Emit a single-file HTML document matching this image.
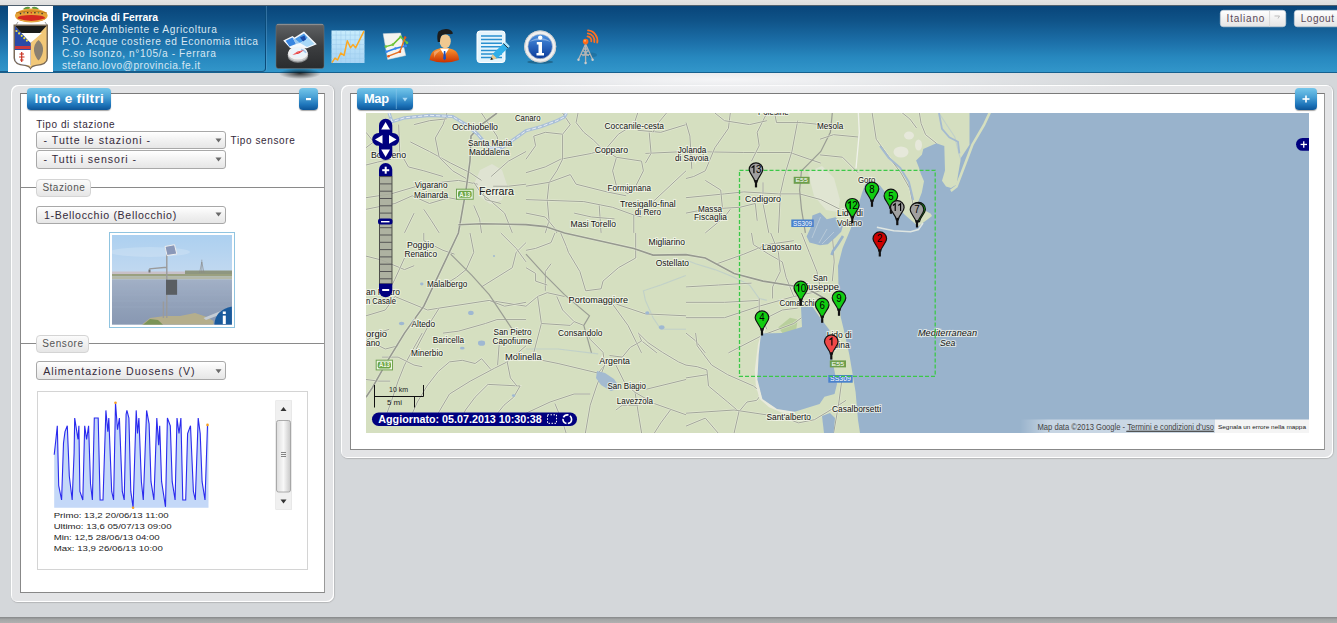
<!DOCTYPE html>
<html><head><meta charset="utf-8">
<style>
*{box-sizing:border-box;margin:0;padding:0}
html,body{width:1337px;height:623px;overflow:hidden}
body{background:#d4d7da;font-family:"Liberation Sans",sans-serif;position:relative}
.abs{position:absolute}
#topstrip{left:0;top:0;width:1337px;height:6px;background:linear-gradient(#e4e4e4,#dcdcdc)}
#header{left:0;top:5px;width:1337px;height:68px;background:linear-gradient(#08457a 0%,#0f5388 22%,#1b6da6 52%,#2788bf 78%,#3296ca 100%);border-top:1px solid #50606e;border-bottom:1px solid #15608e}
#hbox{left:0;top:6px;width:266px;height:66px;border-right:1px solid #0a4a78;border-bottom:1px solid #1a5a88;border-radius:0 0 4px 0;box-shadow:1px 0 0 rgba(120,180,220,.35)}
#glow{left:300px;top:73px;width:850px;height:22px;background:radial-gradient(ellipse 50% 100% at 50% 30%,rgba(248,248,250,.9),rgba(248,248,250,0))}
#bottomstrip{left:0;top:617px;width:1337px;height:6px;background:linear-gradient(#868889,#a4a6a6 40%,#b0b0b0)}
.panel{background:#e3e4e6;border-radius:7px;box-shadow:0 1px 1px #b4b6b8, 1px 0 1px #babcbe, inset 1px 1px 0 #fff, inset -1px -1px 0 #fff}
.inner{background:#fff;border:1px solid #7a7a7a;border-left-color:#888;border-right-color:#999;border-bottom-color:#888}
.bbtn{background:linear-gradient(#74c6ea 0%,#4aa2d6 40%,#1f76bb 75%,#0c5598 100%);border-radius:4px;box-shadow:0 1px 1px rgba(0,0,0,.35)}
.sel{left:36px;width:190px;height:18.5px;border:1px solid #a8a8a8;border-radius:3px;background:linear-gradient(#ffffff,#f4f4f4 40%,#e6e6e6)}
.legend{border:1px solid #d4d4d4;border-radius:4px;background:linear-gradient(#fbfbfb,#e6e6e6)}
</style></head><body>
<div id="topstrip" class="abs"></div>
<div id="header" class="abs"></div>
<div id="hbox" class="abs"></div>
<div id="bottomstrip" class="abs"></div>

<!-- left panel -->
<div class="abs panel" style="left:11px;top:85px;width:323px;height:517px"></div>
<!-- map panel -->
<div class="abs panel" style="left:341px;top:85px;width:992px;height:373px"></div>
<div id="glow" class="abs"></div>
<div class="abs inner" style="left:20px;top:93px;width:305px;height:500px"></div>
<div class="abs inner" style="left:350px;top:93px;width:975px;height:357px"></div>

<div class="abs bbtn" style="left:27px;top:88px;width:84px;height:22px"></div>
<div class="abs bbtn" style="left:299px;top:88px;width:19px;height:22px"></div>
<div class="abs bbtn" style="left:357px;top:88px;width:56px;height:22px"></div>
<div class="abs bbtn" style="left:1295px;top:88px;width:22px;height:22px"></div>

<div class="abs sel" style="top:130.5px"></div>
<div class="abs sel" style="top:150px"></div>
<div class="abs" style="left:21px;top:187px;width:303px;height:1px;background:#8a8a8a"></div>
<div class="abs legend" style="left:35.5px;top:178.5px;width:55px;height:18px"></div>
<div class="abs sel" style="top:205.5px"></div>
<div class="abs" style="left:21px;top:343px;width:303px;height:1px;background:#8a8a8a"></div>
<div class="abs legend" style="left:35.5px;top:334.5px;width:53px;height:18px"></div>
<div class="abs sel" style="top:361px"></div>
<div class="abs" style="left:37px;top:391px;width:271px;height:179px;border:1px solid #d4d4d4;background:#fff"></div>

<div id="map" class="abs" style="left:366px;top:113px;width:943px;height:320px;overflow:hidden"><svg width="943" height="320" viewBox="366 113 943 320" style="position:absolute;left:0;top:0;font-family:'Liberation Sans',sans-serif">
<rect x="366" y="113" width="943" height="320" fill="#d5dfc0"/>
<polygon points="480.0,170.0 492.0,164.0 502.0,170.0 507.0,185.0 502.0,200.0 490.0,204.0 479.0,196.0 475.0,182.0" fill="#dfe3d2"/>
<polygon points="808.0,172.0 822.0,166.0 834.0,178.0 840.0,200.0 838.0,212.0 826.0,210.0 814.0,196.0" fill="#e0e5d2"/>
<ellipse cx="909" cy="135.5" rx="5" ry="4" fill="#e6e8da"/><ellipse cx="901" cy="152" rx="7.5" ry="5.5" fill="#e6e8da"/><ellipse cx="918.5" cy="145" rx="3.5" ry="5.5" fill="#e6e8da"/>
<polygon points="778.4,327.3 790.0,317.7 797.7,319.6 795.7,333.1 782.3,333.1" fill="#b9cf9c"/>
<polyline points="366.0,165.0 377.6,162.1 391.0,159.2" fill="none" stroke="#eef0e2" stroke-width="2.2" stroke-opacity=".55"/>
<polyline points="366.0,165.0 377.6,162.1 391.0,159.2" fill="none" stroke="#a2a69a" stroke-width="1"/>
<polyline points="410.3,141.9 429.5,151.5 450.7,163.1 470.0,172.7 481.5,180.4" fill="none" stroke="#eef0e2" stroke-width="2.2" stroke-opacity=".55"/>
<polyline points="410.3,141.9 429.5,151.5 450.7,163.1 470.0,172.7 481.5,180.4" fill="none" stroke="#a2a69a" stroke-width="1"/>
<polyline points="366.0,197.7 391.0,193.9 423.8,184.2 458.4,180.4 477.7,184.2" fill="none" stroke="#eef0e2" stroke-width="2.2" stroke-opacity=".55"/>
<polyline points="366.0,197.7 391.0,193.9 423.8,184.2 458.4,180.4 477.7,184.2" fill="none" stroke="#a2a69a" stroke-width="1"/>
<polyline points="398.7,124.6 399.7,151.5 408.4,166.9 423.8,170.8 443.0,176.5" fill="none" stroke="#eef0e2" stroke-width="2.2" stroke-opacity=".55"/>
<polyline points="398.7,124.6 399.7,151.5 408.4,166.9 423.8,170.8 443.0,176.5" fill="none" stroke="#a2a69a" stroke-width="1"/>
<polyline points="366.0,209.3 394.9,203.5 412.2,195.8 429.5,203.5 448.8,197.7 458.4,199.6" fill="none" stroke="#eef0e2" stroke-width="2.2" stroke-opacity=".55"/>
<polyline points="366.0,209.3 394.9,203.5 412.2,195.8 429.5,203.5 448.8,197.7 458.4,199.6" fill="none" stroke="#a2a69a" stroke-width="1"/>
<polyline points="423.8,209.3 431.5,220.8 439.2,232.9" fill="none" stroke="#eef0e2" stroke-width="2.2" stroke-opacity=".55"/>
<polyline points="423.8,209.3 431.5,220.8 439.2,232.9" fill="none" stroke="#a2a69a" stroke-width="1"/>
<polyline points="446.9,113.0 443.0,124.6 435.3,138.0 439.2,157.3 452.6,170.8 466.1,178.5" fill="none" stroke="#eef0e2" stroke-width="2.2" stroke-opacity=".55"/>
<polyline points="446.9,113.0 443.0,124.6 435.3,138.0 439.2,157.3 452.6,170.8 466.1,178.5" fill="none" stroke="#a2a69a" stroke-width="1"/>
<polyline points="491.1,176.5 508.5,161.1 526.0,151.5" fill="none" stroke="#eef0e2" stroke-width="2.2" stroke-opacity=".55"/>
<polyline points="491.1,176.5 508.5,161.1 526.0,151.5" fill="none" stroke="#a2a69a" stroke-width="1"/>
<polyline points="473.8,205.4 479.6,218.9 481.5,232.9" fill="none" stroke="#eef0e2" stroke-width="2.2" stroke-opacity=".55"/>
<polyline points="473.8,205.4 479.6,218.9 481.5,232.9" fill="none" stroke="#a2a69a" stroke-width="1"/>
<polyline points="489.2,199.6 504.6,213.1 512.3,232.9" fill="none" stroke="#eef0e2" stroke-width="2.2" stroke-opacity=".55"/>
<polyline points="489.2,199.6 504.6,213.1 512.3,232.9" fill="none" stroke="#a2a69a" stroke-width="1"/>
<polyline points="493.1,186.2 508.5,186.2 526.0,184.2" fill="none" stroke="#eef0e2" stroke-width="2.2" stroke-opacity=".55"/>
<polyline points="493.1,186.2 508.5,186.2 526.0,184.2" fill="none" stroke="#a2a69a" stroke-width="1"/>
<polyline points="414.1,213.1 404.5,232.9" fill="none" stroke="#eef0e2" stroke-width="2.2" stroke-opacity=".55"/>
<polyline points="414.1,213.1 404.5,232.9" fill="none" stroke="#a2a69a" stroke-width="1"/>
<polyline points="481.5,113.0 489.2,124.6 496.9,136.1 500.8,149.6" fill="none" stroke="#eef0e2" stroke-width="2.2" stroke-opacity=".55"/>
<polyline points="481.5,113.0 489.2,124.6 496.9,136.1 500.8,149.6" fill="none" stroke="#a2a69a" stroke-width="1"/>
<polyline points="366.0,132.3 373.7,141.9 366.0,147.7" fill="none" stroke="#eef0e2" stroke-width="2.2" stroke-opacity=".55"/>
<polyline points="366.0,132.3 373.7,141.9 366.0,147.7" fill="none" stroke="#a2a69a" stroke-width="1"/>
<polyline points="414.1,124.6 429.5,120.7 446.9,118.8" fill="none" stroke="#eef0e2" stroke-width="2.2" stroke-opacity=".55"/>
<polyline points="414.1,124.6 429.5,120.7 446.9,118.8" fill="none" stroke="#a2a69a" stroke-width="1"/>
<polyline points="481.5,188.1 485.4,199.6 500.8,203.5" fill="none" stroke="#eef0e2" stroke-width="2.2" stroke-opacity=".55"/>
<polyline points="481.5,188.1 485.4,199.6 500.8,203.5" fill="none" stroke="#a2a69a" stroke-width="1"/>
<polyline points="473.8,182.3 481.5,193.9 489.2,199.6" fill="none" stroke="#eef0e2" stroke-width="2.2" stroke-opacity=".55"/>
<polyline points="473.8,182.3 481.5,193.9 489.2,199.6" fill="none" stroke="#a2a69a" stroke-width="1"/>
<polyline points="526.0,172.7 545.3,166.9 560.7,159.2 591.5,153.4 603.0,149.6" fill="none" stroke="#eef0e2" stroke-width="2.2" stroke-opacity=".55"/>
<polyline points="526.0,172.7 545.3,166.9 560.7,159.2 591.5,153.4 603.0,149.6" fill="none" stroke="#a2a69a" stroke-width="1"/>
<polyline points="562.6,113.0 570.3,124.6 562.6,134.2 562.6,159.2 556.8,170.8 549.1,182.3 547.2,199.6 549.1,220.8 545.3,232.9" fill="none" stroke="#eef0e2" stroke-width="2.2" stroke-opacity=".55"/>
<polyline points="562.6,113.0 570.3,124.6 562.6,134.2 562.6,159.2 556.8,170.8 549.1,182.3 547.2,199.6 549.1,220.8 545.3,232.9" fill="none" stroke="#a2a69a" stroke-width="1"/>
<polyline points="578.0,113.0 576.1,122.6 583.8,132.3 593.4,140.0 603.0,149.6" fill="none" stroke="#eef0e2" stroke-width="2.2" stroke-opacity=".55"/>
<polyline points="578.0,113.0 576.1,122.6 583.8,132.3 593.4,140.0 603.0,149.6" fill="none" stroke="#a2a69a" stroke-width="1"/>
<polyline points="637.7,113.0 633.8,124.6 618.4,134.2 606.9,147.7" fill="none" stroke="#eef0e2" stroke-width="2.2" stroke-opacity=".55"/>
<polyline points="637.7,113.0 633.8,124.6 618.4,134.2 606.9,147.7" fill="none" stroke="#a2a69a" stroke-width="1"/>
<polyline points="603.0,149.6 616.5,157.3 612.6,170.8 616.5,186.2 628.0,193.9" fill="none" stroke="#eef0e2" stroke-width="2.2" stroke-opacity=".55"/>
<polyline points="603.0,149.6 616.5,157.3 612.6,170.8 616.5,186.2 628.0,193.9" fill="none" stroke="#a2a69a" stroke-width="1"/>
<polyline points="616.5,157.3 641.5,161.1 643.4,170.8 635.7,186.2 628.0,193.9" fill="none" stroke="#eef0e2" stroke-width="2.2" stroke-opacity=".55"/>
<polyline points="616.5,157.3 641.5,161.1 643.4,170.8 635.7,186.2 628.0,193.9" fill="none" stroke="#a2a69a" stroke-width="1"/>
<polyline points="526.0,199.6 583.8,201.6 612.6,207.3 633.8,215.0 641.5,217.0" fill="none" stroke="#eef0e2" stroke-width="2.2" stroke-opacity=".55"/>
<polyline points="526.0,199.6 583.8,201.6 612.6,207.3 633.8,215.0 641.5,217.0" fill="none" stroke="#a2a69a" stroke-width="1"/>
<polyline points="526.0,186.2 549.1,182.3 570.3,174.6 576.1,184.2 606.9,191.9 626.1,195.8" fill="none" stroke="#eef0e2" stroke-width="2.2" stroke-opacity=".55"/>
<polyline points="526.0,186.2 549.1,182.3 570.3,174.6 576.1,184.2 606.9,191.9 626.1,195.8" fill="none" stroke="#a2a69a" stroke-width="1"/>
<polyline points="633.8,215.0 633.8,232.9" fill="none" stroke="#eef0e2" stroke-width="2.2" stroke-opacity=".55"/>
<polyline points="633.8,215.0 633.8,232.9" fill="none" stroke="#a2a69a" stroke-width="1"/>
<polyline points="599.2,205.4 601.1,232.9" fill="none" stroke="#eef0e2" stroke-width="2.2" stroke-opacity=".55"/>
<polyline points="599.2,205.4 601.1,232.9" fill="none" stroke="#a2a69a" stroke-width="1"/>
<polyline points="645.4,153.4 686.0,151.5" fill="none" stroke="#eef0e2" stroke-width="2.2" stroke-opacity=".55"/>
<polyline points="645.4,153.4 686.0,151.5" fill="none" stroke="#a2a69a" stroke-width="1"/>
<polyline points="649.2,132.3 651.1,153.4 645.4,163.1" fill="none" stroke="#eef0e2" stroke-width="2.2" stroke-opacity=".55"/>
<polyline points="649.2,132.3 651.1,153.4 645.4,163.1" fill="none" stroke="#a2a69a" stroke-width="1"/>
<polyline points="651.1,203.5 686.0,170.8" fill="none" stroke="#eef0e2" stroke-width="2.2" stroke-opacity=".55"/>
<polyline points="651.1,203.5 686.0,170.8" fill="none" stroke="#a2a69a" stroke-width="1"/>
<polyline points="526.0,213.1 545.3,217.0 554.9,228.5 556.8,232.9" fill="none" stroke="#eef0e2" stroke-width="2.2" stroke-opacity=".55"/>
<polyline points="526.0,213.1 545.3,217.0 554.9,228.5 556.8,232.9" fill="none" stroke="#a2a69a" stroke-width="1"/>
<polyline points="637.7,130.3 660.8,132.3 686.0,124.6" fill="none" stroke="#eef0e2" stroke-width="2.2" stroke-opacity=".55"/>
<polyline points="637.7,130.3 660.8,132.3 686.0,124.6" fill="none" stroke="#a2a69a" stroke-width="1"/>
<polyline points="526.0,159.2 535.6,145.7 533.7,136.1 545.3,132.3 562.6,134.2" fill="none" stroke="#eef0e2" stroke-width="2.2" stroke-opacity=".55"/>
<polyline points="526.0,159.2 535.6,145.7 533.7,136.1 545.3,132.3 562.6,134.2" fill="none" stroke="#a2a69a" stroke-width="1"/>
<polyline points="666.5,113.0 656.9,124.6 653.1,132.3" fill="none" stroke="#eef0e2" stroke-width="2.2" stroke-opacity=".55"/>
<polyline points="666.5,113.0 656.9,124.6 653.1,132.3" fill="none" stroke="#a2a69a" stroke-width="1"/>
<polyline points="574.1,213.1 591.5,217.0 614.6,218.9" fill="none" stroke="#eef0e2" stroke-width="2.2" stroke-opacity=".55"/>
<polyline points="574.1,213.1 591.5,217.0 614.6,218.9" fill="none" stroke="#a2a69a" stroke-width="1"/>
<polyline points="686.0,151.5 743.8,152.5 790.0,152.5 809.2,159.2 820.8,163.1" fill="none" stroke="#eef0e2" stroke-width="2.2" stroke-opacity=".55"/>
<polyline points="686.0,151.5 743.8,152.5 790.0,152.5 809.2,159.2 820.8,163.1" fill="none" stroke="#a2a69a" stroke-width="1"/>
<polyline points="730.3,113.0 728.4,128.4 714.9,147.7 705.3,170.8 693.7,176.5 686.0,178.5" fill="none" stroke="#eef0e2" stroke-width="2.2" stroke-opacity=".55"/>
<polyline points="730.3,113.0 728.4,128.4 714.9,147.7 705.3,170.8 693.7,176.5 686.0,178.5" fill="none" stroke="#a2a69a" stroke-width="1"/>
<polyline points="797.7,120.7 791.9,151.5 784.2,176.5 780.3,193.9 778.4,232.9" fill="none" stroke="#eef0e2" stroke-width="2.2" stroke-opacity=".55"/>
<polyline points="797.7,120.7 791.9,151.5 784.2,176.5 780.3,193.9 778.4,232.9" fill="none" stroke="#a2a69a" stroke-width="1"/>
<polyline points="766.9,113.0 757.2,132.3 759.2,145.7 751.5,161.1" fill="none" stroke="#eef0e2" stroke-width="2.2" stroke-opacity=".55"/>
<polyline points="766.9,113.0 757.2,132.3 759.2,145.7 751.5,161.1" fill="none" stroke="#a2a69a" stroke-width="1"/>
<polyline points="686.0,197.7 724.5,193.9 743.8,191.9 778.4,193.9 799.6,193.9 820.8,199.6 840.0,209.3" fill="none" stroke="#eef0e2" stroke-width="2.2" stroke-opacity=".55"/>
<polyline points="686.0,197.7 724.5,193.9 743.8,191.9 778.4,193.9 799.6,193.9 820.8,199.6 840.0,209.3" fill="none" stroke="#a2a69a" stroke-width="1"/>
<polyline points="705.3,180.4 720.7,190.0 722.6,209.3" fill="none" stroke="#eef0e2" stroke-width="2.2" stroke-opacity=".55"/>
<polyline points="705.3,180.4 720.7,190.0 722.6,209.3" fill="none" stroke="#a2a69a" stroke-width="1"/>
<polyline points="686.0,213.1 705.3,209.3 739.9,207.3 755.3,203.5 757.2,220.8" fill="none" stroke="#eef0e2" stroke-width="2.2" stroke-opacity=".55"/>
<polyline points="686.0,213.1 705.3,209.3 739.9,207.3 755.3,203.5 757.2,220.8" fill="none" stroke="#a2a69a" stroke-width="1"/>
<polyline points="763.0,182.3 763.0,203.5 768.8,232.9" fill="none" stroke="#eef0e2" stroke-width="2.2" stroke-opacity=".55"/>
<polyline points="763.0,182.3 763.0,203.5 768.8,232.9" fill="none" stroke="#a2a69a" stroke-width="1"/>
<polyline points="714.9,113.0 724.5,120.7 749.5,124.6 766.9,120.7" fill="none" stroke="#eef0e2" stroke-width="2.2" stroke-opacity=".55"/>
<polyline points="714.9,113.0 724.5,120.7 749.5,124.6 766.9,120.7" fill="none" stroke="#a2a69a" stroke-width="1"/>
<polyline points="686.0,122.6 689.9,136.1 691.8,168.8" fill="none" stroke="#eef0e2" stroke-width="2.2" stroke-opacity=".55"/>
<polyline points="686.0,122.6 689.9,136.1 691.8,168.8" fill="none" stroke="#a2a69a" stroke-width="1"/>
<polyline points="774.6,113.0 776.5,122.6 801.5,122.6 820.8,124.6" fill="none" stroke="#eef0e2" stroke-width="2.2" stroke-opacity=".55"/>
<polyline points="774.6,113.0 776.5,122.6 801.5,122.6 820.8,124.6" fill="none" stroke="#a2a69a" stroke-width="1"/>
<polyline points="705.3,232.9 724.5,217.0 730.3,209.3" fill="none" stroke="#eef0e2" stroke-width="2.2" stroke-opacity=".55"/>
<polyline points="705.3,232.9 724.5,217.0 730.3,209.3" fill="none" stroke="#a2a69a" stroke-width="1"/>
<polyline points="832.3,113.0 830.4,132.3 820.8,151.5 809.2,163.1 801.5,170.8 799.6,190.0 801.5,209.3 805.4,232.9" fill="none" stroke="#9a9d94" stroke-width="1.2"/>
<polyline points="470.0,233.0 473.8,252.3 466.1,269.6 456.5,277.3 446.9,283.1" fill="none" stroke="#eef0e2" stroke-width="2.2" stroke-opacity=".55"/>
<polyline points="470.0,233.0 473.8,252.3 466.1,269.6 456.5,277.3 446.9,283.1" fill="none" stroke="#a2a69a" stroke-width="1"/>
<polyline points="423.8,233.0 423.8,240.7 443.0,250.3 454.6,254.2" fill="none" stroke="#eef0e2" stroke-width="2.2" stroke-opacity=".55"/>
<polyline points="423.8,233.0 423.8,240.7 443.0,250.3 454.6,254.2" fill="none" stroke="#a2a69a" stroke-width="1"/>
<polyline points="366.0,256.1 381.4,260.0 404.5,269.6 414.1,265.7" fill="none" stroke="#eef0e2" stroke-width="2.2" stroke-opacity=".55"/>
<polyline points="366.0,256.1 381.4,260.0 404.5,269.6 414.1,265.7" fill="none" stroke="#a2a69a" stroke-width="1"/>
<polyline points="394.9,296.5 427.6,310.0 439.2,308.1 489.2,300.4 526.0,306.2" fill="none" stroke="#eef0e2" stroke-width="2.2" stroke-opacity=".55"/>
<polyline points="394.9,296.5 427.6,310.0 439.2,308.1 489.2,300.4 526.0,306.2" fill="none" stroke="#a2a69a" stroke-width="1"/>
<polyline points="439.2,308.1 429.5,323.5 414.1,352.9" fill="none" stroke="#eef0e2" stroke-width="2.2" stroke-opacity=".55"/>
<polyline points="439.2,308.1 429.5,323.5 414.1,352.9" fill="none" stroke="#a2a69a" stroke-width="1"/>
<polyline points="481.5,286.9 512.3,267.7 516.2,252.3 526.0,242.6" fill="none" stroke="#eef0e2" stroke-width="2.2" stroke-opacity=".55"/>
<polyline points="481.5,286.9 512.3,267.7 516.2,252.3 526.0,242.6" fill="none" stroke="#a2a69a" stroke-width="1"/>
<polyline points="500.8,233.0 516.2,248.4 526.0,261.9" fill="none" stroke="#eef0e2" stroke-width="2.2" stroke-opacity=".55"/>
<polyline points="500.8,233.0 516.2,248.4 526.0,261.9" fill="none" stroke="#a2a69a" stroke-width="1"/>
<polyline points="366.0,315.8 385.3,310.0 394.9,296.5" fill="none" stroke="#eef0e2" stroke-width="2.2" stroke-opacity=".55"/>
<polyline points="366.0,315.8 385.3,310.0 394.9,296.5" fill="none" stroke="#a2a69a" stroke-width="1"/>
<polyline points="443.0,333.1 458.4,331.2 485.4,323.5 496.9,319.6 526.0,319.6" fill="none" stroke="#eef0e2" stroke-width="2.2" stroke-opacity=".55"/>
<polyline points="443.0,333.1 458.4,331.2 485.4,323.5 496.9,319.6 526.0,319.6" fill="none" stroke="#a2a69a" stroke-width="1"/>
<polyline points="404.5,258.0 394.9,279.2 389.1,290.8" fill="none" stroke="#eef0e2" stroke-width="2.2" stroke-opacity=".55"/>
<polyline points="404.5,258.0 394.9,279.2 389.1,290.8" fill="none" stroke="#a2a69a" stroke-width="1"/>
<polyline points="366.0,340.8 377.6,333.1 389.1,329.3" fill="none" stroke="#eef0e2" stroke-width="2.2" stroke-opacity=".55"/>
<polyline points="366.0,340.8 377.6,333.1 389.1,329.3" fill="none" stroke="#a2a69a" stroke-width="1"/>
<polyline points="489.2,300.4 504.6,306.2 526.0,302.3" fill="none" stroke="#eef0e2" stroke-width="2.2" stroke-opacity=".55"/>
<polyline points="489.2,300.4 504.6,306.2 526.0,302.3" fill="none" stroke="#a2a69a" stroke-width="1"/>
<polyline points="450.7,254.2 471.9,275.4 489.2,294.6 512.3,329.3" fill="none" stroke="#9a9d94" stroke-width="1.2"/>
<ellipse cx="470.9" cy="312.9" rx="2.8" ry="2.1" fill="#9fb8d2"/>
<ellipse cx="481.5" cy="342.7" rx="3.5" ry="2.1" fill="#9fb8d2"/>
<ellipse cx="401.6" cy="323.5" rx="2.8" ry="1.7" fill="#9fb8d2"/>
<ellipse cx="421.8" cy="284.0" rx="1.7" ry="1.4" fill="#9fb8d2"/>
<ellipse cx="494.0" cy="256.1" rx="1.0" ry="1.0" fill="#9fb8d2"/>
<polyline points="685.8,275.4 660.8,285.0 643.4,290.8 645.4,300.4 653.1,317.7 660.8,329.3 686.0,329.3" fill="none" stroke="#a9bed2" stroke-width="1.1" stroke-opacity=".45"/>
<polyline points="560.7,233.0 566.4,246.5 568.4,252.3 579.9,271.5 585.7,290.8 601.1,288.8 603.0,281.1 618.4,267.7 635.7,258.0 635.7,233.0" fill="none" stroke="#eef0e2" stroke-width="2.2" stroke-opacity=".55"/>
<polyline points="560.7,233.0 566.4,246.5 568.4,252.3 579.9,271.5 585.7,290.8 601.1,288.8 603.0,281.1 618.4,267.7 635.7,258.0 635.7,233.0" fill="none" stroke="#a2a69a" stroke-width="1"/>
<polyline points="526.0,306.2 537.6,296.5 547.2,292.7 564.5,296.5" fill="none" stroke="#eef0e2" stroke-width="2.2" stroke-opacity=".55"/>
<polyline points="526.0,306.2 537.6,296.5 547.2,292.7 564.5,296.5" fill="none" stroke="#a2a69a" stroke-width="1"/>
<polyline points="537.6,296.5 541.4,323.5 533.7,352.9" fill="none" stroke="#eef0e2" stroke-width="2.2" stroke-opacity=".55"/>
<polyline points="537.6,296.5 541.4,323.5 533.7,352.9" fill="none" stroke="#a2a69a" stroke-width="1"/>
<polyline points="612.6,304.2 628.0,325.4 641.5,352.9" fill="none" stroke="#eef0e2" stroke-width="2.2" stroke-opacity=".55"/>
<polyline points="612.6,304.2 628.0,325.4 641.5,352.9" fill="none" stroke="#a2a69a" stroke-width="1"/>
<polyline points="616.5,304.2 645.4,313.9 686.0,315.8" fill="none" stroke="#eef0e2" stroke-width="2.2" stroke-opacity=".55"/>
<polyline points="616.5,304.2 645.4,313.9 686.0,315.8" fill="none" stroke="#a2a69a" stroke-width="1"/>
<polyline points="545.3,290.8 545.3,271.5 551.0,263.8" fill="none" stroke="#eef0e2" stroke-width="2.2" stroke-opacity=".55"/>
<polyline points="545.3,290.8 545.3,271.5 551.0,263.8" fill="none" stroke="#a2a69a" stroke-width="1"/>
<polyline points="541.4,323.5 570.3,325.4 574.1,321.6 583.8,325.4" fill="none" stroke="#eef0e2" stroke-width="2.2" stroke-opacity=".55"/>
<polyline points="541.4,323.5 570.3,325.4 574.1,321.6 583.8,325.4" fill="none" stroke="#a2a69a" stroke-width="1"/>
<polyline points="526.0,267.7 535.6,273.4 535.6,281.1 547.2,285.0" fill="none" stroke="#eef0e2" stroke-width="2.2" stroke-opacity=".55"/>
<polyline points="526.0,267.7 535.6,273.4 535.6,281.1 547.2,285.0" fill="none" stroke="#a2a69a" stroke-width="1"/>
<polyline points="554.9,233.0 551.0,242.6 535.6,248.4 526.0,250.3" fill="none" stroke="#eef0e2" stroke-width="2.2" stroke-opacity=".55"/>
<polyline points="554.9,233.0 551.0,242.6 535.6,248.4 526.0,250.3" fill="none" stroke="#a2a69a" stroke-width="1"/>
<polyline points="556.8,296.5 562.6,310.0 574.1,321.6" fill="none" stroke="#eef0e2" stroke-width="2.2" stroke-opacity=".55"/>
<polyline points="556.8,296.5 562.6,310.0 574.1,321.6" fill="none" stroke="#a2a69a" stroke-width="1"/>
<polyline points="641.5,340.8 656.9,352.9" fill="none" stroke="#eef0e2" stroke-width="2.2" stroke-opacity=".55"/>
<polyline points="641.5,340.8 656.9,352.9" fill="none" stroke="#a2a69a" stroke-width="1"/>
<polyline points="526.0,254.2 545.3,275.4 564.5,294.6 589.5,315.8 583.8,325.4 591.5,352.9" fill="none" stroke="#9a9d94" stroke-width="1.2"/>
<ellipse cx="661.7" cy="327.3" rx="2.8" ry="2.1" fill="#9fb8d2"/>
<ellipse cx="647.3" cy="312.9" rx="2.1" ry="1.7" fill="#9fb8d2"/>
<polyline points="686.0,260.0 695.6,263.8 714.9,269.6 734.1,277.3 749.5,285.0 759.2,298.5 766.9,300.4" fill="none" stroke="#a9bed2" stroke-width="1.1" stroke-opacity=".45"/>
<polyline points="686.0,317.7 724.5,317.7 759.2,306.2 793.8,296.5 820.8,290.8" fill="none" stroke="#eef0e2" stroke-width="2.2" stroke-opacity=".55"/>
<polyline points="686.0,317.7 724.5,317.7 759.2,306.2 793.8,296.5 820.8,290.8" fill="none" stroke="#a2a69a" stroke-width="1"/>
<polyline points="716.8,263.8 743.8,254.2 766.9,244.6 793.8,240.7" fill="none" stroke="#eef0e2" stroke-width="2.2" stroke-opacity=".55"/>
<polyline points="716.8,263.8 743.8,254.2 766.9,244.6 793.8,240.7" fill="none" stroke="#a2a69a" stroke-width="1"/>
<polyline points="751.5,233.0 753.4,244.6 768.8,254.2 782.3,261.9 786.1,277.3 793.8,296.5" fill="none" stroke="#eef0e2" stroke-width="2.2" stroke-opacity=".55"/>
<polyline points="751.5,233.0 753.4,244.6 768.8,254.2 782.3,261.9 786.1,277.3 793.8,296.5" fill="none" stroke="#a2a69a" stroke-width="1"/>
<polyline points="770.7,233.0 778.4,252.3 780.3,271.5 772.6,286.9 772.6,298.5" fill="none" stroke="#eef0e2" stroke-width="2.2" stroke-opacity=".55"/>
<polyline points="770.7,233.0 778.4,252.3 780.3,271.5 772.6,286.9 772.6,298.5" fill="none" stroke="#a2a69a" stroke-width="1"/>
<polyline points="801.5,233.0 809.2,252.3 816.9,271.5 820.8,290.8" fill="none" stroke="#eef0e2" stroke-width="2.2" stroke-opacity=".55"/>
<polyline points="801.5,233.0 809.2,252.3 816.9,271.5 820.8,290.8" fill="none" stroke="#a2a69a" stroke-width="1"/>
<polyline points="686.0,286.9 718.7,285.0 751.5,283.1" fill="none" stroke="#eef0e2" stroke-width="2.2" stroke-opacity=".55"/>
<polyline points="686.0,286.9 718.7,285.0 751.5,283.1" fill="none" stroke="#a2a69a" stroke-width="1"/>
<polyline points="728.4,352.9 763.0,335.0 793.8,323.5 801.5,317.7" fill="none" stroke="#eef0e2" stroke-width="2.2" stroke-opacity=".55"/>
<polyline points="728.4,352.9 763.0,335.0 793.8,323.5 801.5,317.7" fill="none" stroke="#a2a69a" stroke-width="1"/>
<polyline points="686.0,333.1 695.6,340.8 705.3,352.9" fill="none" stroke="#eef0e2" stroke-width="2.2" stroke-opacity=".55"/>
<polyline points="686.0,333.1 695.6,340.8 705.3,352.9" fill="none" stroke="#a2a69a" stroke-width="1"/>
<polyline points="686.0,302.3 724.5,302.3 759.2,300.4" fill="none" stroke="#eef0e2" stroke-width="2.2" stroke-opacity=".55"/>
<polyline points="686.0,302.3 724.5,302.3 759.2,300.4" fill="none" stroke="#a2a69a" stroke-width="1"/>
<polyline points="759.2,298.5 759.2,310.0 766.9,329.3" fill="none" stroke="#eef0e2" stroke-width="2.2" stroke-opacity=".55"/>
<polyline points="759.2,298.5 759.2,310.0 766.9,329.3" fill="none" stroke="#a2a69a" stroke-width="1"/>
<polyline points="766.9,317.7 782.3,310.0 797.7,308.1" fill="none" stroke="#eef0e2" stroke-width="2.2" stroke-opacity=".55"/>
<polyline points="766.9,317.7 782.3,310.0 797.7,308.1" fill="none" stroke="#a2a69a" stroke-width="1"/>
<polyline points="832.3,233.0 834.2,261.9 832.3,281.1" fill="none" stroke="#eef0e2" stroke-width="2.2" stroke-opacity=".55"/>
<polyline points="832.3,233.0 834.2,261.9 832.3,281.1" fill="none" stroke="#a2a69a" stroke-width="1"/>
<polyline points="422.2,333.0 414.1,347.4 404.5,365.1 398.1,381.1 391.7,400.4 386.9,413.2" fill="none" stroke="#eef0e2" stroke-width="2.2" stroke-opacity=".55"/>
<polyline points="422.2,333.0 414.1,347.4 404.5,365.1 398.1,381.1 391.7,400.4 386.9,413.2" fill="none" stroke="#a2a69a" stroke-width="1"/>
<polyline points="438.2,371.5 449.5,361.9 462.3,360.3 475.1,363.5 481.6,358.7 491.2,369.9" fill="none" stroke="#eef0e2" stroke-width="2.2" stroke-opacity=".55"/>
<polyline points="438.2,371.5 449.5,361.9 462.3,360.3 475.1,363.5 481.6,358.7 491.2,369.9" fill="none" stroke="#a2a69a" stroke-width="1"/>
<polyline points="438.2,371.5 427.0,386.0 417.4,402.0 410.9,416.5" fill="none" stroke="#eef0e2" stroke-width="2.2" stroke-opacity=".55"/>
<polyline points="438.2,371.5 427.0,386.0 417.4,402.0 410.9,416.5" fill="none" stroke="#a2a69a" stroke-width="1"/>
<polyline points="526.0,345.8 507.2,361.9 494.4,368.3 470.3,381.1 449.5,394.0 438.2,413.2 433.4,426.1" fill="none" stroke="#eef0e2" stroke-width="2.2" stroke-opacity=".55"/>
<polyline points="526.0,345.8 507.2,361.9 494.4,368.3 470.3,381.1 449.5,394.0 438.2,413.2 433.4,426.1" fill="none" stroke="#a2a69a" stroke-width="1"/>
<polyline points="488.0,384.4 520.1,386.0 513.6,397.2 504.0,405.2 497.6,413.2 491.2,422.9" fill="none" stroke="#eef0e2" stroke-width="2.2" stroke-opacity=".55"/>
<polyline points="488.0,384.4 520.1,386.0 513.6,397.2 504.0,405.2 497.6,413.2 491.2,422.9" fill="none" stroke="#a2a69a" stroke-width="1"/>
<polyline points="488.0,384.4 475.1,397.2 465.5,410.0 459.1,422.9" fill="none" stroke="#eef0e2" stroke-width="2.2" stroke-opacity=".55"/>
<polyline points="488.0,384.4 475.1,397.2 465.5,410.0 459.1,422.9" fill="none" stroke="#a2a69a" stroke-width="1"/>
<polyline points="382.0,357.1 398.1,357.1 414.1,365.1 422.2,366.7" fill="none" stroke="#eef0e2" stroke-width="2.2" stroke-opacity=".55"/>
<polyline points="382.0,357.1 398.1,357.1 414.1,365.1 422.2,366.7" fill="none" stroke="#a2a69a" stroke-width="1"/>
<polyline points="366.0,379.5 378.8,381.1 390.1,381.1" fill="none" stroke="#eef0e2" stroke-width="2.2" stroke-opacity=".55"/>
<polyline points="366.0,379.5 378.8,381.1 390.1,381.1" fill="none" stroke="#a2a69a" stroke-width="1"/>
<polyline points="499.2,344.2 497.6,365.1" fill="none" stroke="#eef0e2" stroke-width="2.2" stroke-opacity=".55"/>
<polyline points="499.2,344.2 497.6,365.1" fill="none" stroke="#a2a69a" stroke-width="1"/>
<polyline points="507.2,361.9 510.4,377.9 516.9,386.0" fill="none" stroke="#eef0e2" stroke-width="2.2" stroke-opacity=".55"/>
<polyline points="507.2,361.9 510.4,377.9 516.9,386.0" fill="none" stroke="#a2a69a" stroke-width="1"/>
<polyline points="366.0,345.8 375.6,344.2 385.3,349.0 398.1,345.8" fill="none" stroke="#eef0e2" stroke-width="2.2" stroke-opacity=".55"/>
<polyline points="366.0,345.8 375.6,344.2 385.3,349.0 398.1,345.8" fill="none" stroke="#a2a69a" stroke-width="1"/>
<ellipse cx="481.6" cy="343.4" rx="3.5" ry="2.3" fill="#9fb8d2"/>
<ellipse cx="462.3" cy="348.2" rx="2.3" ry="1.4" fill="#9fb8d2"/>
<ellipse cx="513.6" cy="395.6" rx="1.7" ry="1.4" fill="#9fb8d2"/>
<polyline points="526.0,349.0 558.1,349.0 598.2,353.9" fill="none" stroke="#a9bed2" stroke-width="1.1" stroke-opacity=".45"/>
<polyline points="526.0,357.1 558.1,363.5 598.2,373.1 604.6,365.1 603.0,352.3 590.2,339.4 587.0,333.0" fill="none" stroke="#eef0e2" stroke-width="2.2" stroke-opacity=".55"/>
<polyline points="526.0,357.1 558.1,363.5 598.2,373.1 604.6,365.1 603.0,352.3 590.2,339.4 587.0,333.0" fill="none" stroke="#a2a69a" stroke-width="1"/>
<polyline points="604.6,365.1 596.6,386.0 590.2,405.2 585.4,433.0" fill="none" stroke="#eef0e2" stroke-width="2.2" stroke-opacity=".55"/>
<polyline points="604.6,365.1 596.6,386.0 590.2,405.2 585.4,433.0" fill="none" stroke="#a2a69a" stroke-width="1"/>
<polyline points="609.5,355.5 622.3,357.1 630.3,347.4 641.6,341.0 638.3,333.0" fill="none" stroke="#eef0e2" stroke-width="2.2" stroke-opacity=".55"/>
<polyline points="609.5,355.5 622.3,357.1 630.3,347.4 641.6,341.0 638.3,333.0" fill="none" stroke="#a2a69a" stroke-width="1"/>
<polyline points="615.9,365.1 625.5,384.4 635.1,392.4 638.3,413.2 641.6,433.0" fill="none" stroke="#eef0e2" stroke-width="2.2" stroke-opacity=".55"/>
<polyline points="615.9,365.1 625.5,384.4 635.1,392.4 638.3,413.2 641.6,433.0" fill="none" stroke="#a2a69a" stroke-width="1"/>
<polyline points="635.1,392.4 654.4,403.6 686.0,414.8" fill="none" stroke="#eef0e2" stroke-width="2.2" stroke-opacity=".55"/>
<polyline points="635.1,392.4 654.4,403.6 686.0,414.8" fill="none" stroke="#a2a69a" stroke-width="1"/>
<polyline points="646.4,389.2 686.0,379.5" fill="none" stroke="#eef0e2" stroke-width="2.2" stroke-opacity=".55"/>
<polyline points="646.4,389.2 686.0,379.5" fill="none" stroke="#a2a69a" stroke-width="1"/>
<polyline points="526.0,413.2 550.1,402.0 574.1,394.0 590.2,394.0" fill="none" stroke="#eef0e2" stroke-width="2.2" stroke-opacity=".55"/>
<polyline points="526.0,413.2 550.1,402.0 574.1,394.0 590.2,394.0" fill="none" stroke="#a2a69a" stroke-width="1"/>
<polyline points="638.3,333.0 648.0,342.6 662.4,352.3 678.5,361.9 686.0,365.1" fill="none" stroke="#eef0e2" stroke-width="2.2" stroke-opacity=".55"/>
<polyline points="638.3,333.0 648.0,342.6 662.4,352.3 678.5,361.9 686.0,365.1" fill="none" stroke="#a2a69a" stroke-width="1"/>
<polyline points="615.9,410.0 622.3,405.2 638.3,405.2" fill="none" stroke="#eef0e2" stroke-width="2.2" stroke-opacity=".55"/>
<polyline points="615.9,410.0 622.3,405.2 638.3,405.2" fill="none" stroke="#a2a69a" stroke-width="1"/>
<polyline points="670.4,410.0 660.8,422.9 654.4,433.0" fill="none" stroke="#eef0e2" stroke-width="2.2" stroke-opacity=".55"/>
<polyline points="670.4,410.0 660.8,422.9 654.4,433.0" fill="none" stroke="#a2a69a" stroke-width="1"/>
<polyline points="554.9,403.6 562.9,422.9 566.1,433.0" fill="none" stroke="#eef0e2" stroke-width="2.2" stroke-opacity=".55"/>
<polyline points="554.9,403.6 562.9,422.9 566.1,433.0" fill="none" stroke="#a2a69a" stroke-width="1"/>
<polyline points="686.0,365.1 697.2,366.7 706.9,369.9 708.5,386.0 718.1,394.0 727.7,402.0 739.0,411.6 734.1,433.0" fill="none" stroke="#eef0e2" stroke-width="2.2" stroke-opacity=".55"/>
<polyline points="686.0,365.1 697.2,366.7 706.9,369.9 708.5,386.0 718.1,394.0 727.7,402.0 739.0,411.6 734.1,433.0" fill="none" stroke="#a2a69a" stroke-width="1"/>
<polyline points="739.0,411.6 747.0,402.0 756.6,400.4 763.0,392.4" fill="none" stroke="#eef0e2" stroke-width="2.2" stroke-opacity=".55"/>
<polyline points="739.0,411.6 747.0,402.0 756.6,400.4 763.0,392.4" fill="none" stroke="#a2a69a" stroke-width="1"/>
<polyline points="686.0,377.9 706.9,374.7" fill="none" stroke="#eef0e2" stroke-width="2.2" stroke-opacity=".55"/>
<polyline points="686.0,377.9 706.9,374.7" fill="none" stroke="#a2a69a" stroke-width="1"/>
<polyline points="695.6,333.0 697.2,345.8 711.7,365.1 727.7,374.7 753.4,386.0 761.4,392.4" fill="none" stroke="#eef0e2" stroke-width="2.2" stroke-opacity=".55"/>
<polyline points="695.6,333.0 697.2,345.8 711.7,365.1 727.7,374.7 753.4,386.0 761.4,392.4" fill="none" stroke="#a2a69a" stroke-width="1"/>
<polyline points="686.0,413.2 734.1,410.0 766.2,414.8 782.3,416.5" fill="none" stroke="#eef0e2" stroke-width="2.2" stroke-opacity=".55"/>
<polyline points="686.0,413.2 734.1,410.0 766.2,414.8 782.3,416.5" fill="none" stroke="#a2a69a" stroke-width="1"/>
<polyline points="686.0,426.1 705.3,418.1 718.1,433.0" fill="none" stroke="#eef0e2" stroke-width="2.2" stroke-opacity=".55"/>
<polyline points="686.0,426.1 705.3,418.1 718.1,433.0" fill="none" stroke="#a2a69a" stroke-width="1"/>
<polyline points="782.3,416.5 798.3,422.9 814.4,419.7 838.5,405.2 846.0,400.4" fill="none" stroke="#eef0e2" stroke-width="2.2" stroke-opacity=".55"/>
<polyline points="782.3,416.5 798.3,422.9 814.4,419.7 838.5,405.2 846.0,400.4" fill="none" stroke="#a2a69a" stroke-width="1"/>
<polyline points="841.7,381.1 838.5,405.2 833.6,433.0" fill="none" stroke="#eef0e2" stroke-width="2.2" stroke-opacity=".55"/>
<polyline points="841.7,381.1 838.5,405.2 833.6,433.0" fill="none" stroke="#a2a69a" stroke-width="1"/>
<polyline points="936.9,110.0 945.8,123.5 954.8,137.0 959.3,154.9 963.8,168.4" fill="none" stroke="#a9bed2" stroke-width="1.1" stroke-opacity=".45"/>
<polyline points="871.7,110.0 876.2,139.2 887.4,154.9 900.9,172.9 909.9,188.7 914.4,211.1" fill="none" stroke="#eef0e2" stroke-width="2.2" stroke-opacity=".55"/>
<polyline points="871.7,110.0 876.2,139.2 887.4,154.9 900.9,172.9 909.9,188.7 914.4,211.1" fill="none" stroke="#a2a69a" stroke-width="1"/>
<polyline points="820.0,154.9 842.5,157.2 858.2,172.9" fill="none" stroke="#eef0e2" stroke-width="2.2" stroke-opacity=".55"/>
<polyline points="820.0,154.9 842.5,157.2 858.2,172.9" fill="none" stroke="#a2a69a" stroke-width="1"/>
<polyline points="918.9,110.0 921.1,123.5 925.6,134.7 936.9,143.7" fill="none" stroke="#eef0e2" stroke-width="2.2" stroke-opacity=".55"/>
<polyline points="918.9,110.0 921.1,123.5 925.6,134.7 936.9,143.7" fill="none" stroke="#a2a69a" stroke-width="1"/>
<polyline points="898.7,110.0 909.9,119.0 916.6,128.0" fill="none" stroke="#eef0e2" stroke-width="2.2" stroke-opacity=".55"/>
<polyline points="898.7,110.0 909.9,119.0 916.6,128.0" fill="none" stroke="#a2a69a" stroke-width="1"/>
<polyline points="820.0,139.2 833.5,134.7 858.2,137.0" fill="none" stroke="#eef0e2" stroke-width="2.2" stroke-opacity=".55"/>
<polyline points="820.0,139.2 833.5,134.7 858.2,137.0" fill="none" stroke="#a2a69a" stroke-width="1"/>
<polyline points="858.2,110.0 859.3,132.5 856.0,168.4" fill="none" stroke="#f0f2ea" stroke-width="1.3"/>
<polyline points="497.0,113.0 481.5,124.6 471.0,136.0 470.0,161.0 466.0,190.0 458.4,233.0 443.0,265.7 423.8,306.2 404.5,333.1 386.9,361.9 372.4,387.6 366.0,397.2" fill="none" stroke="#eef0e4" stroke-width="2.8" stroke-opacity=".5"/>
<polyline points="497.0,113.0 481.5,124.6 471.0,136.0 470.0,161.0 466.0,190.0 458.4,233.0 443.0,265.7 423.8,306.2 404.5,333.1 386.9,361.9 372.4,387.6 366.0,397.2" fill="none" stroke="#96998f" stroke-width="1.6"/>
<polyline points="458.4,224.7 481.5,223.7 526.0,224.6 545.3,226.6 564.5,233.0 599.2,240.7 633.8,248.4 653.0,255.1 686.0,254.6 705.3,258.0 734.1,273.4 763.0,281.1 793.8,286.0 811.1,290.8 824.6,298.5" fill="none" stroke="#eef0e4" stroke-width="2.8" stroke-opacity=".5"/>
<polyline points="458.4,224.7 481.5,223.7 526.0,224.6 545.3,226.6 564.5,233.0 599.2,240.7 633.8,248.4 653.0,255.1 686.0,254.6 705.3,258.0 734.1,273.4 763.0,281.1 793.8,286.0 811.1,290.8 824.6,298.5" fill="none" stroke="#96998f" stroke-width="1.6"/>
<polyline points="389.0,113.0 392.0,121.7 404.5,117.8 429.5,115.3 452.6,116.5 466.0,124.6 477.7,134.2 489.2,147.7 500.8,148.6 526.0,130.8 541.4,126.5 556.8,120.7 564.5,116.9 566.4,113.0" fill="none" stroke="#a9bfd8" stroke-width="3.2"/>
<polyline points="389.0,113.0 392.0,121.7 404.5,117.8 429.5,115.3 452.6,116.5 466.0,124.6 477.7,134.2 489.2,147.7 500.8,148.6 526.0,130.8 541.4,126.5 556.8,120.7 564.5,116.9 566.4,113.0" fill="none" stroke="#e8eef4" stroke-width="1" stroke-dasharray="4 2"/>
<polygon points="860.0,433.0 858.0,420.0 855.6,392.0 849.4,355.0 843.6,329.0 840.7,317.0 838.5,287.0 838.0,266.0 842.6,248.0 850.6,229.0 857.6,207.6 862.0,193.0 866.0,182.0 871.2,180.0 880.2,185.7 888.0,195.8 897.0,207.0 905.0,215.0 912.8,221.7 918.4,226.2 923.0,222.8 927.4,219.4 932.0,216.0 930.8,213.8 922.9,209.3 918.4,201.5 921.8,192.5 924.0,181.2 920.7,173.4 919.0,167.8 916.1,160.5 921.9,154.8 923.3,149.0 936.3,143.2 944.3,146.0 945.0,170.6 942.0,180.8 946.0,186.5 951.0,188.0 956.6,184.6 958.0,175.0 961.0,157.7 969.5,144.7 969.5,113.0 1309.0,113.0 1309.0,433.0" fill="#99b3cc"/>
<polyline points="764.0,328.0 759.5,345.0 756.4,370.0 757.4,385.0 761.0,398.0 770.0,406.0 782.0,411.0 795.0,413.0" fill="none" stroke="#e8eadc" stroke-width="3.2"/>
<polygon points="761.0,333.4 782.0,333.0 802.0,327.0 801.0,307.0 812.0,306.0 819.6,317.0 829.5,330.0 827.0,344.6 830.8,352.0 837.0,384.0 834.5,394.0 824.5,396.8 819.6,404.0 794.7,411.7 777.0,409.0 762.4,399.0 757.4,379.4 758.7,354.6" fill="#99b3cc"/>
<polygon points="822.0,416.0 830.0,413.0 835.0,418.0 833.6,433.0 824.0,433.0" fill="#99b3cc"/>
<polygon points="812.3,215.4 820.0,212.5 826.8,219.3 835.5,217.3 843.2,225.0 841.2,231.8 835.5,237.6 827.8,244.3 820.0,245.3 809.5,242.4 806.6,236.6 811.4,226.0" fill="#99b3cc"/>
<polyline points="843.0,236.0 838.0,244.0 833.0,251.0 831.6,255.0" fill="none" stroke="#99b3cc" stroke-width="2.6"/>
<path d="M820.5,217 L812,238 M827,229 L819,243 M834,232 L822,244" stroke="#c4d2dc" stroke-width=".7"/>
<polygon points="597.0,371.0 605.0,373.0 614.0,379.0 620.0,388.0 611.0,391.0 601.0,385.0 596.0,378.0" fill="#a3bad0"/>
<polyline points="876.9,227.3 893.7,230.7 910.6,231.8 918.4,229.6 923.0,223.0" fill="none" stroke="#dfe6e2" stroke-width="1.6"/>
<polyline points="990.0,112.0 984.0,125.0 972.4,144.7 960.9,175.0 956.5,186.5 950.8,190.9" fill="none" stroke="#d5dfc0" stroke-width="2.6"/>
<polyline points="939.0,113.0 942.0,128.8 949.3,137.4 958.0,141.8 959.4,153.3" fill="none" stroke="#a4bad0" stroke-width="1.8"/>
<polyline points="880.0,146.0 888.7,157.7 900.2,167.8 908.9,182.2 913.2,200.0" fill="none" stroke="#a4bad0" stroke-width="2"/>
<text x="515" y="121" textLength="25.5" lengthAdjust="spacingAndGlyphs" font-size="9" font-weight="normal" fill="#141414" stroke="#f6f8ee" stroke-width="2.2" stroke-opacity=".7" paint-order="stroke">Canaro</text>
<text x="452" y="130.4" textLength="46.0" lengthAdjust="spacingAndGlyphs" font-size="9" font-weight="normal" fill="#141414" stroke="#f6f8ee" stroke-width="2.2" stroke-opacity=".7" paint-order="stroke">Occhiobello</text>
<text x="468" y="146" textLength="44.0" lengthAdjust="spacingAndGlyphs" font-size="9" font-weight="normal" fill="#141414" stroke="#f6f8ee" stroke-width="2.2" stroke-opacity=".7" paint-order="stroke">Santa Maria</text>
<text x="469" y="154.5" textLength="40.6" lengthAdjust="spacingAndGlyphs" font-size="9" font-weight="normal" fill="#141414" stroke="#f6f8ee" stroke-width="2.2" stroke-opacity=".7" paint-order="stroke">Maddalena</text>
<text x="371" y="158" textLength="35.0" lengthAdjust="spacingAndGlyphs" font-size="9" font-weight="normal" fill="#141414" stroke="#f6f8ee" stroke-width="2.2" stroke-opacity=".7" paint-order="stroke">Bondeno</text>
<text x="414.7" y="188" textLength="32.8" lengthAdjust="spacingAndGlyphs" font-size="9" font-weight="normal" fill="#141414" stroke="#f6f8ee" stroke-width="2.2" stroke-opacity=".7" paint-order="stroke">Vigarano</text>
<text x="414" y="197.6" textLength="34.0" lengthAdjust="spacingAndGlyphs" font-size="9" font-weight="normal" fill="#141414" stroke="#f6f8ee" stroke-width="2.2" stroke-opacity=".7" paint-order="stroke">Mainarda</text>
<text x="407" y="247.6" textLength="27.0" lengthAdjust="spacingAndGlyphs" font-size="9" font-weight="normal" fill="#141414" stroke="#f6f8ee" stroke-width="2.2" stroke-opacity=".7" paint-order="stroke">Poggio</text>
<text x="404.5" y="256.6" textLength="32.5" lengthAdjust="spacingAndGlyphs" font-size="9" font-weight="normal" fill="#141414" stroke="#f6f8ee" stroke-width="2.2" stroke-opacity=".7" paint-order="stroke">Renatico</text>
<text x="604.5" y="129" textLength="59.5" lengthAdjust="spacingAndGlyphs" font-size="9" font-weight="normal" fill="#141414" stroke="#f6f8ee" stroke-width="2.2" stroke-opacity=".7" paint-order="stroke">Coccanile-cesta</text>
<text x="677.7" y="152.8" textLength="28.7" lengthAdjust="spacingAndGlyphs" font-size="9" font-weight="normal" fill="#141414" stroke="#f6f8ee" stroke-width="2.2" stroke-opacity=".7" paint-order="stroke">Jolanda</text>
<text x="675" y="161" textLength="33.5" lengthAdjust="spacingAndGlyphs" font-size="9" font-weight="normal" fill="#141414" stroke="#f6f8ee" stroke-width="2.2" stroke-opacity=".7" paint-order="stroke">di Savoia</text>
<text x="607.6" y="191" textLength="43.4" lengthAdjust="spacingAndGlyphs" font-size="9" font-weight="normal" fill="#141414" stroke="#f6f8ee" stroke-width="2.2" stroke-opacity=".7" paint-order="stroke">Formignana</text>
<text x="620" y="206.6" textLength="55.7" lengthAdjust="spacingAndGlyphs" font-size="9" font-weight="normal" fill="#141414" stroke="#f6f8ee" stroke-width="2.2" stroke-opacity=".7" paint-order="stroke">Tresigallo-final</text>
<text x="634.8" y="215" textLength="26.2" lengthAdjust="spacingAndGlyphs" font-size="9" font-weight="normal" fill="#141414" stroke="#f6f8ee" stroke-width="2.2" stroke-opacity=".7" paint-order="stroke">di Rero</text>
<text x="698" y="211.7" textLength="24.0" lengthAdjust="spacingAndGlyphs" font-size="9" font-weight="normal" fill="#141414" stroke="#f6f8ee" stroke-width="2.2" stroke-opacity=".7" paint-order="stroke">Massa</text>
<text x="694" y="220" textLength="33.0" lengthAdjust="spacingAndGlyphs" font-size="9" font-weight="normal" fill="#141414" stroke="#f6f8ee" stroke-width="2.2" stroke-opacity=".7" paint-order="stroke">Fiscaglia</text>
<text x="570.6" y="227" textLength="45.4" lengthAdjust="spacingAndGlyphs" font-size="9" font-weight="normal" fill="#141414" stroke="#f6f8ee" stroke-width="2.2" stroke-opacity=".7" paint-order="stroke">Masi Torello</text>
<text x="648.6" y="245" textLength="36.4" lengthAdjust="spacingAndGlyphs" font-size="9" font-weight="normal" fill="#141414" stroke="#f6f8ee" stroke-width="2.2" stroke-opacity=".7" paint-order="stroke">Migliarino</text>
<text x="655.7" y="265.6" textLength="33.3" lengthAdjust="spacingAndGlyphs" font-size="9" font-weight="normal" fill="#141414" stroke="#f6f8ee" stroke-width="2.2" stroke-opacity=".7" paint-order="stroke">Ostellato</text>
<text x="427" y="287" textLength="40.3" lengthAdjust="spacingAndGlyphs" font-size="9" font-weight="normal" fill="#141414" stroke="#f6f8ee" stroke-width="2.2" stroke-opacity=".7" paint-order="stroke">Malalbergo</text>
<text x="366" y="294.8" textLength="34.0" lengthAdjust="spacingAndGlyphs" font-size="9" font-weight="normal" fill="#141414" stroke="#f6f8ee" stroke-width="2.2" stroke-opacity=".7" paint-order="stroke">an Pietro</text>
<text x="366" y="303.8" textLength="30.0" lengthAdjust="spacingAndGlyphs" font-size="9" font-weight="normal" fill="#141414" stroke="#f6f8ee" stroke-width="2.2" stroke-opacity=".7" paint-order="stroke">n Casale</text>
<text x="411.6" y="327.4" textLength="23.4" lengthAdjust="spacingAndGlyphs" font-size="9" font-weight="normal" fill="#141414" stroke="#f6f8ee" stroke-width="2.2" stroke-opacity=".7" paint-order="stroke">Altedo</text>
<text x="366" y="336.6" textLength="21.0" lengthAdjust="spacingAndGlyphs" font-size="9" font-weight="normal" fill="#141414" stroke="#f6f8ee" stroke-width="2.2" stroke-opacity=".7" paint-order="stroke">orgio</text>
<text x="366" y="346" textLength="14.0" lengthAdjust="spacingAndGlyphs" font-size="9" font-weight="normal" fill="#141414" stroke="#f6f8ee" stroke-width="2.2" stroke-opacity=".7" paint-order="stroke">ano</text>
<text x="432.7" y="342.7" textLength="31.3" lengthAdjust="spacingAndGlyphs" font-size="9" font-weight="normal" fill="#141414" stroke="#f6f8ee" stroke-width="2.2" stroke-opacity=".7" paint-order="stroke">Baricella</text>
<text x="411" y="356.4" textLength="32.0" lengthAdjust="spacingAndGlyphs" font-size="9" font-weight="normal" fill="#141414" stroke="#f6f8ee" stroke-width="2.2" stroke-opacity=".7" paint-order="stroke">Minerbio</text>
<text x="493.6" y="334.5" textLength="38.0" lengthAdjust="spacingAndGlyphs" font-size="9" font-weight="normal" fill="#141414" stroke="#f6f8ee" stroke-width="2.2" stroke-opacity=".7" paint-order="stroke">San Pietro</text>
<text x="492.6" y="343.5" textLength="39.4" lengthAdjust="spacingAndGlyphs" font-size="9" font-weight="normal" fill="#141414" stroke="#f6f8ee" stroke-width="2.2" stroke-opacity=".7" paint-order="stroke">Capofiume</text>
<text x="505" y="359.8" textLength="36.6" lengthAdjust="spacingAndGlyphs" font-size="9" font-weight="normal" fill="#141414" stroke="#f6f8ee" stroke-width="2.2" stroke-opacity=".7" paint-order="stroke">Molinella</text>
<text x="558" y="335.8" textLength="44.4" lengthAdjust="spacingAndGlyphs" font-size="9" font-weight="normal" fill="#141414" stroke="#f6f8ee" stroke-width="2.2" stroke-opacity=".7" paint-order="stroke">Consandolo</text>
<text x="607.5" y="389" textLength="38.5" lengthAdjust="spacingAndGlyphs" font-size="9" font-weight="normal" fill="#141414" stroke="#f6f8ee" stroke-width="2.2" stroke-opacity=".7" paint-order="stroke">San Biagio</text>
<text x="616.8" y="404.3" textLength="36.2" lengthAdjust="spacingAndGlyphs" font-size="9" font-weight="normal" fill="#141414" stroke="#f6f8ee" stroke-width="2.2" stroke-opacity=".7" paint-order="stroke">Lavezzola</text>
<text x="758" y="115" textLength="30.8" lengthAdjust="spacingAndGlyphs" font-size="9" font-weight="normal" fill="#141414" stroke="#f6f8ee" stroke-width="2.2" stroke-opacity=".7" paint-order="stroke">Polesine</text>
<text x="817" y="129.4" textLength="26.3" lengthAdjust="spacingAndGlyphs" font-size="9" font-weight="normal" fill="#141414" stroke="#f6f8ee" stroke-width="2.2" stroke-opacity=".7" paint-order="stroke">Mesola</text>
<text x="745" y="201.6" textLength="36.0" lengthAdjust="spacingAndGlyphs" font-size="9" font-weight="normal" fill="#141414" stroke="#f6f8ee" stroke-width="2.2" stroke-opacity=".7" paint-order="stroke">Codigoro</text>
<text x="858" y="182.7" textLength="17.5" lengthAdjust="spacingAndGlyphs" font-size="9" font-weight="normal" fill="#141414" stroke="#f6f8ee" stroke-width="2.2" stroke-opacity=".7" paint-order="stroke">Goro</text>
<text x="837" y="216" textLength="26.0" lengthAdjust="spacingAndGlyphs" font-size="9" font-weight="normal" fill="#141414" stroke="#f6f8ee" stroke-width="2.2" stroke-opacity=".7" paint-order="stroke">Lido di</text>
<text x="837" y="225.7" textLength="25.0" lengthAdjust="spacingAndGlyphs" font-size="9" font-weight="normal" fill="#141414" stroke="#f6f8ee" stroke-width="2.2" stroke-opacity=".7" paint-order="stroke">Volano</text>
<text x="813" y="281" textLength="14.4" lengthAdjust="spacingAndGlyphs" font-size="9" font-weight="normal" fill="#141414" stroke="#f6f8ee" stroke-width="2.2" stroke-opacity=".7" paint-order="stroke">San</text>
<text x="798.7" y="290" textLength="40.3" lengthAdjust="spacingAndGlyphs" font-size="9" font-weight="normal" fill="#141414" stroke="#f6f8ee" stroke-width="2.2" stroke-opacity=".7" paint-order="stroke">Giuseppe</text>
<text x="779.5" y="305.5" textLength="39.5" lengthAdjust="spacingAndGlyphs" font-size="9" font-weight="normal" fill="#141414" stroke="#f6f8ee" stroke-width="2.2" stroke-opacity=".7" paint-order="stroke">Comacchio</text>
<text x="826.7" y="338.4" textLength="25.0" lengthAdjust="spacingAndGlyphs" font-size="9" font-weight="normal" fill="#141414" stroke="#f6f8ee" stroke-width="2.2" stroke-opacity=".7" paint-order="stroke">Lido di</text>
<text x="828" y="347.6" textLength="21.6" lengthAdjust="spacingAndGlyphs" font-size="9" font-weight="normal" fill="#141414" stroke="#f6f8ee" stroke-width="2.2" stroke-opacity=".7" paint-order="stroke">Spina</text>
<text x="832" y="412.2" textLength="49.0" lengthAdjust="spacingAndGlyphs" font-size="9" font-weight="normal" fill="#141414" stroke="#f6f8ee" stroke-width="2.2" stroke-opacity=".7" paint-order="stroke">Casalborsetti</text>
<text x="766.4" y="420" textLength="44.5" lengthAdjust="spacingAndGlyphs" font-size="9" font-weight="normal" fill="#141414" stroke="#f6f8ee" stroke-width="2.2" stroke-opacity=".7" paint-order="stroke">Sant'alberto</text>
<text x="762" y="250.3" textLength="39.5" lengthAdjust="spacingAndGlyphs" font-size="9" font-weight="normal" fill="#141414" stroke="#f6f8ee" stroke-width="2.2" stroke-opacity=".7" paint-order="stroke">Lagosanto</text>
<text x="479" y="194.5" textLength="35.0" lengthAdjust="spacingAndGlyphs" font-size="10.5" font-weight="normal" fill="#141414" stroke="#f6f8ee" stroke-width="2.2" stroke-opacity=".7" paint-order="stroke">Ferrara</text>
<text x="594.7" y="152.8" textLength="33.3" lengthAdjust="spacingAndGlyphs" font-size="9.3" font-weight="normal" fill="#141414" stroke="#f6f8ee" stroke-width="2.2" stroke-opacity=".7" paint-order="stroke">Copparo</text>
<text x="568.6" y="302.5" textLength="59.4" lengthAdjust="spacingAndGlyphs" font-size="9.2" font-weight="normal" fill="#141414" stroke="#f6f8ee" stroke-width="2.2" stroke-opacity=".7" paint-order="stroke">Portomaggiore</text>
<text x="599.3" y="364" textLength="30.7" lengthAdjust="spacingAndGlyphs" font-size="9.3" font-weight="normal" fill="#141414" stroke="#f6f8ee" stroke-width="2.2" stroke-opacity=".7" paint-order="stroke">Argenta</text>
<text x="918" y="336" textLength="59.0" lengthAdjust="spacingAndGlyphs" font-size="9" font-style="italic" font-weight="normal" fill="#141414" stroke="#f6f8ee" stroke-width="2.2" stroke-opacity=".7" paint-order="stroke">Mediterranean</text>
<text x="940" y="346" textLength="15.4" lengthAdjust="spacingAndGlyphs" font-size="9" font-style="italic" font-weight="normal" fill="#141414" stroke="#f6f8ee" stroke-width="2.2" stroke-opacity=".7" paint-order="stroke">Sea</text>
<rect x="456.5" y="189.2" width="16.7" height="10.0" fill="#eef6e6" stroke="#70a450" stroke-width="1"/><rect x="458.0" y="190.7" width="13.7" height="7.0" rx="2.2" fill="#6aa444"/><text x="459.2" y="196.7" textLength="11.3" lengthAdjust="spacingAndGlyphs" font-size="7.0" font-weight="bold" fill="#f0f8e8">A13</text>
<rect x="376.2" y="360.2" width="16.3" height="9.7" fill="#eef6e6" stroke="#70a450" stroke-width="1"/><rect x="377.7" y="361.7" width="13.3" height="6.7" rx="2.2" fill="#6aa444"/><text x="378.9" y="367.4" textLength="10.9" lengthAdjust="spacingAndGlyphs" font-size="6.7" font-weight="bold" fill="#f0f8e8">A13</text>
<rect x="793.7" y="176.8" width="15.9" height="7.0" fill="#6e9e4c"/><text x="795.5" y="182.4" textLength="12.3" lengthAdjust="spacingAndGlyphs" font-size="6.0" fill="#fff">E55</text>
<rect x="829.8" y="360.4" width="16.2" height="7.0" fill="#6e9e4c"/><text x="831.6" y="366.0" textLength="12.6" lengthAdjust="spacingAndGlyphs" font-size="6.0" fill="#fff">E55</text>
<rect x="791.3" y="219.5" width="22.5" height="7.5" fill="#4a82cc"/><text x="793.1" y="225.6" textLength="18.9" lengthAdjust="spacingAndGlyphs" font-size="6.5" fill="#fff">SS309</text>
<rect x="828.3" y="375" width="24.4" height="7.7" fill="#4a82cc"/><text x="830.1" y="381.3" textLength="20.8" lengthAdjust="spacingAndGlyphs" font-size="6.7" fill="#fff">SS309</text>
<rect x="739.5" y="170.3" width="195.7" height="206.1" fill="none" stroke="#3cc848" stroke-width="1.3" stroke-dasharray="4 2"/>
<path d="M749.20,169.60 A6.8,6.8 0 1 1 762.80,169.60 C762.80,173.80 757.60,177.10 756.90,182.10 L755.10,182.10 C754.40,177.10 749.20,173.80 749.20,169.60 Z" fill="#a0a0a0" stroke="#111" stroke-width="1.2"/><rect x="754.90" y="180.10" width="2.2" height="7.3" fill="#111"/><path d="M751.60,167.70 L753.90,165.90 V173.30" stroke="#000" stroke-width="1.15" fill="none"/><text x="756.00" y="173.30" textLength="5.4" lengthAdjust="spacingAndGlyphs" font-size="10.2" fill="#000">3</text>
<path d="M845.50,205.30 A6.8,6.8 0 1 1 859.10,205.30 C859.10,209.50 853.90,212.80 853.20,217.80 L851.40,217.80 C850.70,212.80 845.50,209.50 845.50,205.30 Z" fill="#11cc11" stroke="#111" stroke-width="1.2"/><rect x="851.20" y="215.80" width="2.2" height="7.3" fill="#111"/><path d="M847.90,203.40 L850.20,201.60 V209.00" stroke="#000" stroke-width="1.15" fill="none"/><text x="852.30" y="209.00" textLength="5.4" lengthAdjust="spacingAndGlyphs" font-size="10.2" fill="#000">2</text>
<path d="M865.20,189.00 A6.8,6.8 0 1 1 878.80,189.00 C878.80,193.20 873.60,196.50 872.90,201.50 L871.10,201.50 C870.40,196.50 865.20,193.20 865.20,189.00 Z" fill="#11cc11" stroke="#111" stroke-width="1.2"/><rect x="870.90" y="199.50" width="2.2" height="7.3" fill="#111"/><text x="869.30" y="192.70" textLength="5.4" lengthAdjust="spacingAndGlyphs" font-size="10.2" fill="#000">8</text>
<path d="M884.10,196.00 A6.8,6.8 0 1 1 897.70,196.00 C897.70,200.20 892.50,203.50 891.80,208.50 L890.00,208.50 C889.30,203.50 884.10,200.20 884.10,196.00 Z" fill="#11cc11" stroke="#111" stroke-width="1.2"/><rect x="889.80" y="206.50" width="2.2" height="7.3" fill="#111"/><text x="888.20" y="199.70" textLength="5.4" lengthAdjust="spacingAndGlyphs" font-size="10.2" fill="#000">5</text>
<path d="M911.80,209.20 A6.8,6.8 0 1 1 925.40,209.20 C925.40,213.40 920.20,216.70 919.50,221.70 L917.70,221.70 C917.00,216.70 911.80,213.40 911.80,209.20 Z" fill="#11cc11" stroke="#111" stroke-width="1.2"/>
<path d="M890.50,207.40 A6.8,6.8 0 1 1 904.10,207.40 C904.10,211.60 898.90,214.90 898.20,219.90 L896.40,219.90 C895.70,214.90 890.50,211.60 890.50,207.40 Z" fill="#a0a0a0" stroke="#111" stroke-width="1.2"/><rect x="896.20" y="217.90" width="2.2" height="7.3" fill="#111"/><path d="M892.90,205.50 L895.20,203.70 V211.10" stroke="#000" stroke-width="1.15" fill="none"/><path d="M898.30,205.50 L900.60,203.70 V211.10" stroke="#000" stroke-width="1.15" fill="none"/>
<path d="M910.20,209.70 A6.8,6.8 0 1 1 923.80,209.70 C923.80,213.90 918.60,217.20 917.90,222.20 L916.10,222.20 C915.40,217.20 910.20,213.90 910.20,209.70 Z" fill="#a0a0a0" stroke="#111" stroke-width="1.2"/><rect x="915.90" y="220.20" width="2.2" height="7.3" fill="#111"/><text x="914.30" y="213.40" textLength="5.4" lengthAdjust="spacingAndGlyphs" font-size="10.2" fill="#000">7</text>
<path d="M873.00,238.70 A6.8,6.8 0 1 1 886.60,238.70 C886.60,242.90 881.40,246.20 880.70,251.20 L878.90,251.20 C878.20,246.20 873.00,242.90 873.00,238.70 Z" fill="#cc0000" stroke="#111" stroke-width="1.2"/><rect x="878.70" y="249.20" width="2.2" height="7.3" fill="#111"/><text x="877.10" y="242.40" textLength="5.4" lengthAdjust="spacingAndGlyphs" font-size="10.2" fill="#000">2</text>
<path d="M794.00,288.00 A6.8,6.8 0 1 1 807.60,288.00 C807.60,292.20 802.40,295.50 801.70,300.50 L799.90,300.50 C799.20,295.50 794.00,292.20 794.00,288.00 Z" fill="#11cc11" stroke="#111" stroke-width="1.2"/><rect x="799.70" y="298.50" width="2.2" height="7.3" fill="#111"/><path d="M796.40,286.10 L798.70,284.30 V291.70" stroke="#000" stroke-width="1.15" fill="none"/><text x="800.80" y="291.70" textLength="5.4" lengthAdjust="spacingAndGlyphs" font-size="10.2" fill="#000">0</text>
<path d="M832.20,298.00 A6.8,6.8 0 1 1 845.80,298.00 C845.80,302.20 840.60,305.50 839.90,310.50 L838.10,310.50 C837.40,305.50 832.20,302.20 832.20,298.00 Z" fill="#11cc11" stroke="#111" stroke-width="1.2"/><rect x="837.90" y="308.50" width="2.2" height="7.3" fill="#111"/><text x="836.30" y="301.70" textLength="5.4" lengthAdjust="spacingAndGlyphs" font-size="10.2" fill="#000">9</text>
<path d="M815.40,305.00 A6.8,6.8 0 1 1 829.00,305.00 C829.00,309.20 823.80,312.50 823.10,317.50 L821.30,317.50 C820.60,312.50 815.40,309.20 815.40,305.00 Z" fill="#11cc11" stroke="#111" stroke-width="1.2"/><rect x="821.10" y="315.50" width="2.2" height="7.3" fill="#111"/><text x="819.50" y="308.70" textLength="5.4" lengthAdjust="spacingAndGlyphs" font-size="10.2" fill="#000">6</text>
<path d="M755.20,317.70 A6.8,6.8 0 1 1 768.80,317.70 C768.80,321.90 763.60,325.20 762.90,330.20 L761.10,330.20 C760.40,325.20 755.20,321.90 755.20,317.70 Z" fill="#11cc11" stroke="#111" stroke-width="1.2"/><rect x="760.90" y="328.20" width="2.2" height="7.3" fill="#111"/><text x="759.30" y="321.40" textLength="5.4" lengthAdjust="spacingAndGlyphs" font-size="10.2" fill="#000">4</text>
<path d="M824.50,341.70 A6.8,6.8 0 1 1 838.10,341.70 C838.10,345.90 832.90,349.20 832.20,354.20 L830.40,354.20 C829.70,349.20 824.50,345.90 824.50,341.70 Z" fill="#f04848" stroke="#111" stroke-width="1.2"/><rect x="830.20" y="352.20" width="2.2" height="7.3" fill="#111"/><path d="M829.60,339.80 L831.90,338.00 V345.40" stroke="#000" stroke-width="1.15" fill="none"/>
<rect x="379" y="118.8" width="13.3" height="41.2" rx="6.6" fill="#00007f"/>
<rect x="372.2" y="133" width="27" height="12.8" rx="6.4" fill="#00007f"/>
<polygon points="385.6,122 381.2,129.5 390,129.5" fill="#fff"/>
<polygon points="385.6,157 381.2,149.5 390,149.5" fill="#fff"/>
<polygon points="375,139.4 382.5,135 382.5,143.8" fill="#fff"/>
<polygon points="396.5,139.4 389,135 389,143.8" fill="#fff"/>
<path d="M379,176.6 V169.6 A6.6,6.6 0 0 1 392.3,169.6 V176.6 Z" fill="#00007f"/>
<rect x="382.2" y="169.2" width="7" height="2" fill="#fff"/><rect x="384.7" y="166.7" width="2" height="7" fill="#fff"/>
<rect x="379.4" y="176.6" width="12.6" height="107.2" fill="#a9ac9c" fill-opacity=".88" stroke="#333" stroke-width=".8"/>
<line x1="379.4" y1="176.6" x2="392" y2="176.6" stroke="#555" stroke-width="1"/>
<line x1="379.4" y1="183.9" x2="392" y2="183.9" stroke="#555" stroke-width="1"/>
<line x1="379.4" y1="191.2" x2="392" y2="191.2" stroke="#555" stroke-width="1"/>
<line x1="379.4" y1="198.5" x2="392" y2="198.5" stroke="#555" stroke-width="1"/>
<line x1="379.4" y1="205.8" x2="392" y2="205.8" stroke="#555" stroke-width="1"/>
<line x1="379.4" y1="213.1" x2="392" y2="213.1" stroke="#555" stroke-width="1"/>
<line x1="379.4" y1="220.4" x2="392" y2="220.4" stroke="#555" stroke-width="1"/>
<line x1="379.4" y1="227.7" x2="392" y2="227.7" stroke="#555" stroke-width="1"/>
<line x1="379.4" y1="235.0" x2="392" y2="235.0" stroke="#555" stroke-width="1"/>
<line x1="379.4" y1="242.3" x2="392" y2="242.3" stroke="#555" stroke-width="1"/>
<line x1="379.4" y1="249.6" x2="392" y2="249.6" stroke="#555" stroke-width="1"/>
<line x1="379.4" y1="256.9" x2="392" y2="256.9" stroke="#555" stroke-width="1"/>
<line x1="379.4" y1="264.2" x2="392" y2="264.2" stroke="#555" stroke-width="1"/>
<line x1="379.4" y1="271.5" x2="392" y2="271.5" stroke="#555" stroke-width="1"/>
<line x1="379.4" y1="278.8" x2="392" y2="278.8" stroke="#555" stroke-width="1"/>
<path d="M379,283.8 V290.6 A6.6,6.6 0 0 0 392.3,290.6 V283.8 Z" fill="#00007f"/>
<rect x="382.2" y="289" width="7" height="2" fill="#fff"/>
<rect x="378" y="218.5" width="14.5" height="6.1" rx="2.5" fill="#00007f"/>
<rect x="381" y="221" width="8.5" height="1.4" fill="#fff"/>
<path d="M1309,137.9 H1302.5 A6.45,6.45 0 0 0 1302.5,150.8 H1309 Z" fill="#00007f"/>
<rect x="1300.6" y="143.8" width="6.4" height="1.3" fill="#fff"/><rect x="1303.1" y="141.3" width="1.3" height="6.4" fill="#fff"/>
<g stroke="#111" stroke-width="1" fill="none"><polyline points="374.5,385 374.5,407.5"/><polyline points="374.5,396.5 423.5,396.5"/><polyline points="423.5,385 423.5,396.5"/><polyline points="414.5,396.5 414.5,407.5"/></g>
<text x="389" y="392" font-size="7" textLength="19" lengthAdjust="spacingAndGlyphs" fill="#222">10 km</text>
<text x="387" y="404.5" font-size="7" textLength="15" lengthAdjust="spacingAndGlyphs" fill="#222">5 mi</text>
<rect x="372" y="412.5" width="205" height="13.5" rx="6.7" fill="#00007f"/>
<text x="378.3" y="423.2" font-size="10.5" font-weight="bold" textLength="163.5" lengthAdjust="spacingAndGlyphs" fill="#fff">Aggiornato: 05.07.2013 10:30:38</text>
<rect x="547.5" y="414.8" width="9" height="8.5" fill="none" stroke="#fff" stroke-width="1" stroke-dasharray="1.5 1.5"/>
<circle cx="567.3" cy="419.2" r="4.3" fill="none" stroke="#fff" stroke-width="1.6" stroke-dasharray="6 1.5"/>
<defs><linearGradient id="attg" x1="0" x2="1"><stop offset="0" stop-color="#fff" stop-opacity="0"/><stop offset=".15" stop-color="#fff" stop-opacity=".45"/><stop offset="1" stop-color="#fff" stop-opacity=".5"/></linearGradient></defs>
<rect x="1020" y="419.5" width="195" height="13.5" fill="url(#attg)"/>
<text x="1037.5" y="429.8" font-size="9" textLength="176.5" lengthAdjust="spacingAndGlyphs" fill="#444">Map data ©2013 Google - <tspan text-decoration="underline">Termini e condizioni d'uso</tspan></text>
<rect x="1037.5" y="431" width="0" height="0"/>
<line x1="1126" y1="431.3" x2="1213.5" y2="431.3" stroke="#444" stroke-width=".8"/>
<rect x="1215" y="419.5" width="94" height="13.5" fill="#f4f4f4"/>
<text x="1218" y="428.5" font-size="6" textLength="88" lengthAdjust="spacingAndGlyphs" fill="#222">Segnala un errore nella mappa</text>
</svg></div>
<svg width="1337" height="623" viewBox="0 0 1337 623" style="position:absolute;left:0;top:0;font-family:'Liberation Sans',sans-serif"><rect x="8" y="6" width="45" height="66" fill="#fff"/>
<path d="M23,9 Q27,5 31,8 Q35,5 39,9 L37,10 Q31,8 25,10 Z" fill="#5a9a40"/>
<circle cx="31" cy="8.2" r="1.3" fill="#fff"/>
<ellipse cx="31.3" cy="15.6" rx="16.3" ry="7" fill="#e6a438"/>
<ellipse cx="31.3" cy="18.2" rx="13.8" ry="3.3" fill="#d42a20"/>
<path d="M17.5,19 Q31.3,24 45,19" stroke="#e8b048" stroke-width="1.2" fill="none"/>
<path d="M16,13 Q31,9 47,13" stroke="#c07818" stroke-width="1" fill="none"/>
<circle cx="20.5" cy="13.6" r=".8" fill="#333"/>
<circle cx="24.1" cy="12.8" r=".8" fill="#666"/>
<circle cx="27.7" cy="12.8" r=".8" fill="#222"/>
<circle cx="31.3" cy="12.8" r=".8" fill="#c02020"/>
<circle cx="34.9" cy="12.8" r=".8" fill="#222"/>
<circle cx="38.5" cy="12.8" r=".8" fill="#5a8a50"/>
<circle cx="42.1" cy="13.6" r=".8" fill="#333"/>
<path d="M18,22 L16,25 M45,22 L47,25" stroke="#777" stroke-width=".7"/>
<path d="M13.5,24.5 H48 V58 Q48,65 36,66 Q31,67 30.5,70 Q30,67 25,66 Q13.5,65 13.5,58 Z" fill="#7a6a58"/>
<path d="M15,26 H46.5 V58 Q46.5,64 36,64.7 Q31.5,65.3 30.5,68 Q29.5,65.3 25,64.7 Q15,64 15,58 Z" fill="#f2c878"/>
<polygon points="15,26 46.5,26 30.5,43" fill="#1a1a1a"/>
<polygon points="19,33 42,33 30.5,43" fill="#fff"/>
<path d="M15,26 L30.5,43 V65 Q29.5,65.3 25,64.7 Q15,64 15,58 Z" fill="#2a4aa8"/>
<polygon points="15,32 19,33 30.5,43 30.5,50 15,50" fill="#2a4aa8"/>
<path d="M15,50 H30.5 V66 Q29.5,65.3 25,64.7 Q15,64 15,58 Z" fill="#fff"/>
<rect x="15" y="46" width="15.5" height="3" fill="#c83840"/>
<circle cx="16.5" cy="31.0" r="1.1" fill="#f0e040"/>
<circle cx="19.1" cy="33.4" r="1.1" fill="#f0e040"/>
<circle cx="21.7" cy="35.8" r="1.1" fill="#f0e040"/>
<circle cx="24.3" cy="38.2" r="1.1" fill="#f0e040"/>
<circle cx="26.9" cy="40.6" r="1.1" fill="#f0e040"/>
<path d="M21.7,52 V62 M19.5,54 L24,54 M19,57 L24.5,57 M20,60 L23.5,60" stroke="#c83020" stroke-width="1.2"/>
<path d="M38.5,40 Q43.5,44 43,51 Q42,57 38.5,60.5 Q35,57 34,51 Q33.5,44 38.5,40 Z" fill="#8a8070"/><defs><linearGradient id="selg" x1="0" y1="0" x2="0" y2="1"><stop offset="0" stop-color="#606264"/><stop offset=".5" stop-color="#3c3e40"/><stop offset="1" stop-color="#2a2c2e"/></linearGradient><radialGradient id="shad" cx=".5" cy=".5" r=".5"><stop offset="0" stop-color="#000" stop-opacity=".75"/><stop offset="1" stop-color="#000" stop-opacity="0"/></radialGradient><linearGradient id="infog" x1="0" y1="0" x2="0" y2="1"><stop offset="0" stop-color="#4a90e0"/><stop offset="1" stop-color="#0a3a9a"/></linearGradient><linearGradient id="persg" x1="0" y1="0" x2="0" y2="1"><stop offset="0" stop-color="#ff9a30"/><stop offset="1" stop-color="#c83000"/></linearGradient><linearGradient id="gridg" x1="0" y1="0" x2="0" y2="1"><stop offset="0" stop-color="#c8ecfc"/><stop offset="1" stop-color="#a8d4f4"/></linearGradient></defs>
<ellipse cx="300" cy="73.5" rx="21" ry="5.5" fill="url(#shad)"/>
<rect x="276" y="24" width="48" height="44.5" rx="2.5" fill="url(#selg)" stroke="#777" stroke-width=".5"/>
<line x1="277" y1="24.6" x2="323" y2="24.6" stroke="#9a9c9e" stroke-width=".8"/>
<polygon points="283.2,40.5 292.5,35.9 294.5,37.6 304,31.6 316.8,44.3 307,48.2 290,48" fill="#f4f8fc"/>
<polygon points="285.6,40.7 292.5,37.6 296,44 289.5,46.5" fill="#3a86e0"/>
<polygon points="292.5,37.6 294.8,39 300,43 296,44" fill="#9cc8f0"/>
<polygon points="294.8,39 304,33.6 308,38 300,43" fill="#4a9ae8"/>
<polygon points="304,33.6 314.6,44 307,47 300,43 308,38" fill="#a8d8f8"/>
<path d="M300,37.5 L304.5,35.5 L306,39.5 L303,41.5 Z" fill="#1a4aa8"/>
<ellipse cx="297.9" cy="56" rx="10.2" ry="6.8" fill="#8c8e90"/>
<ellipse cx="297.9" cy="54.6" rx="10.2" ry="6.8" fill="#c8cacc"/>
<ellipse cx="297.9" cy="53" rx="9.8" ry="6.6" fill="#f2f2f2"/>
<ellipse cx="298.2" cy="52.8" rx="8" ry="5.2" fill="#eaf4fc"/>
<path d="M301,49.5 A8,5.2 0 0 1 306,53" stroke="#a8c8ec" stroke-width="1.6" fill="none"/>
<polygon points="292.3,55 304.2,50 299,53.6" fill="#e82020"/>
<polygon points="292.3,55 304.2,50 297.5,51.6" fill="#f04848"/>
<rect x="331.5" y="30.5" width="33" height="32.5" fill="url(#gridg)"/>
<path d="M336.2,30.5 V63 M331.5,35.1 H364.5 M340.9,30.5 V63 M331.5,39.8 H364.5 M345.6,30.5 V63 M331.5,44.5 H364.5 M350.3,30.5 V63 M331.5,49.1 H364.5 M355.0,30.5 V63 M331.5,53.8 H364.5 M359.7,30.5 V63 M331.5,58.4 H364.5" stroke="#9ccaec" stroke-width=".5"/>
<polyline points="331.9,62.6 335,58.1 337.6,60 340.8,53 344,55.5 347.3,40.8 350.5,47.8 353,44.6 355.6,47.8 364,31.1" fill="none" stroke="#fca820" stroke-width="1.5" stroke-linejoin="round"/>
<polygon points="383.2,33.7 400.6,33.1 405.7,55.5 387.7,59.4" fill="#f4f4f0" stroke="#ddd" stroke-width=".5"/>
<polyline points="385.8,46.6 392.9,44.6 400.6,36.9 407,42.7" fill="none" stroke="#66c030" stroke-width="1.5"/>
<polyline points="386.4,51.7 395.4,48.5 405.7,45.9" fill="none" stroke="#2a80e8" stroke-width="1.6"/>
<polyline points="388.4,56.2 399.9,51.7 405.1,37.6" fill="none" stroke="#e87020" stroke-width="1.4"/>
<circle cx="385.8" cy="46.6" r="1.3" fill="#70c840"/>
<circle cx="392.9" cy="44.6" r="1.3" fill="#70c840"/>
<circle cx="400.6" cy="36.9" r="1.3" fill="#70c840"/>
<circle cx="407" cy="42.7" r="1.3" fill="#70c840"/>
<circle cx="386.4" cy="51.7" r="1.3" fill="#3a88f0"/>
<circle cx="395.4" cy="48.5" r="1.3" fill="#3a88f0"/>
<circle cx="405.7" cy="45.9" r="1.3" fill="#3a88f0"/>
<circle cx="388.4" cy="56.2" r="1.3" fill="#e05a20"/>
<circle cx="399.9" cy="51.7" r="1.3" fill="#e05a20"/>
<circle cx="405.1" cy="37.6" r="1.3" fill="#e05a20"/>
<path d="M429.5,60 Q430,52 436,49.5 L441,48 L448,48 L453,49.5 Q459,52 459,60 Q444,65 429.5,60 Z" fill="url(#persg)"/>
<path d="M434,52 Q438,49.5 441,50 Q436,53 434,58 Z" fill="#fff" fill-opacity=".3"/>
<polygon points="440,48.5 444.5,55.5 449,48.5" fill="#fff"/>
<polygon points="443.9,51 445.3,51 446,58.5 444.6,60.5 443.2,58.5" fill="#1a50c0"/>
<ellipse cx="445.2" cy="41.2" rx="5.6" ry="7" fill="#f0c890"/>
<path d="M437.8,42 Q436.5,35 438.5,31.5 Q442,28.5 447,29 Q452,29.5 453,33.5 L451,34.2 Q446,33.5 442,35 Q440,37 440,42 Z" fill="#1c1c1c"/>
<rect x="477" y="31" width="28" height="31.5" rx="3" fill="#e4f4fc" stroke="#fff" stroke-width="1"/>
<path d="M481,36.0 H502 M481,39.6 H502 M481,43.2 H502 M481,46.8 H502 M481,50.4 H502 M481,54.0 H502 M481,57.6 H502" stroke="#2a90d0" stroke-width="1.5"/>
<polygon points="490.5,60 492.5,54 503.5,43.5 508,48 497,58.5" fill="#30aee8"/>
<polygon points="503.5,43.5 505.5,41.8 509.8,46.2 508,48" fill="#b0e4f8"/>
<line x1="503.3" y1="43.4" x2="507.9" y2="48" stroke="#1a2a3a" stroke-width="1"/>
<polygon points="490.5,60 492.5,54 497,58.5" fill="#e8c890"/>
<polygon points="490.5,60 491.3,57.3 493.2,59.2" fill="#1a1a1a"/>
<ellipse cx="540.2" cy="62" rx="13" ry="1.8" fill="#000" fill-opacity=".25"/>
<circle cx="540.2" cy="46.5" r="16" fill="#f0f0f0"/>
<circle cx="540.2" cy="46.5" r="15.6" fill="none" stroke="#c4c4c4" stroke-width=".8"/>
<circle cx="540.2" cy="46.5" r="12.3" fill="url(#infog)" stroke="#d0d0d0" stroke-width=".6"/>
<path d="M529,42 Q540,34 551,42 Q540,38 529,42 Z" fill="#fff" fill-opacity=".35"/>
<circle cx="540.2" cy="37.6" r="2.2" fill="#fff"/>
<path d="M536.8,42 H542 V53 H544 V55.5 H536.5 V53 H538.5 V44.5 H536.8 Z" fill="#fff"/>
<ellipse cx="591" cy="55" rx="6" ry="2.5" fill="#000" fill-opacity=".12"/>
<path d="M585.6,44 L578.5,59.5 M585.6,44 L592.6,59.5 M585.6,44 V63 M581,54 Q585.6,56.5 590.2,54 M583,49 H588.2 M582.5,50 L588.7,56 M588.7,50 L582.5,56" stroke="#b4b4b4" stroke-width="1.3" fill="none"/>
<circle cx="578.5" cy="59.8" r="1.2" fill="#ccc"/><circle cx="592.6" cy="59.8" r="1.2" fill="#ccc"/><circle cx="585.6" cy="63" r="1.2" fill="#ccc"/>
<circle cx="585.6" cy="41.6" r="2.8" fill="#ff6a18"/><circle cx="585" cy="40.8" r="1" fill="#ffb060"/>
<path d="M587.5,36.4 A4.2,4.2 0 0 1 591.3,41.4" stroke="#ff7020" stroke-width="1.8" fill="none" stroke-linecap="round"/>
<path d="M587.8,33.4 A7.2,7.2 0 0 1 594.3,42.0" stroke="#ff7020" stroke-width="1.8" fill="none" stroke-linecap="round"/>
<path d="M588.0,30.4 A10.2,10.2 0 0 1 597.2,42.6" stroke="#ff7020" stroke-width="1.8" fill="none" stroke-linecap="round"/><text x="62.0" y="20.8" textLength="96.0" lengthAdjust="spacing" font-size="10.4" font-weight="bold" fill="#ffffff" >Provincia di Ferrara</text>
<text x="62.0" y="32.6" textLength="155.0" lengthAdjust="spacing" font-size="10.2" font-weight="normal" fill="#d6e6f2" >Settore Ambiente e Agricoltura</text>
<text x="62.0" y="44.7" textLength="196.0" lengthAdjust="spacing" font-size="10.2" font-weight="normal" fill="#d6e6f2" >P.O. Acque costiere ed Economia ittica</text>
<text x="62.0" y="56.7" textLength="154.0" lengthAdjust="spacing" font-size="10.2" font-weight="normal" fill="#d6e6f2" >C.so Isonzo, n°105/a - Ferrara</text>
<text x="62.0" y="68.6" textLength="138.0" lengthAdjust="spacing" font-size="10.2" font-weight="normal" fill="#d6e6f2" >stefano.lovo@provincia.fe.it</text><defs><linearGradient id="wbtn" x1="0" y1="0" x2="0" y2="1"><stop offset="0" stop-color="#ffffff"/><stop offset="1" stop-color="#e4e4e4"/></linearGradient></defs>
<rect x="1220.3" y="10.3" width="65.5" height="16.5" rx="3" fill="url(#wbtn)" stroke="#c8d0d8" stroke-width=".6"/>
<line x1="1269.6" y1="11" x2="1269.6" y2="26.5" stroke="#d8d8d8" stroke-width="1"/>
<path d="M1274.5,16 H1279.5 L1278,18.5" stroke="#bbb" stroke-width="1" fill="none"/>
<text x="1226.6" y="22.2" textLength="37.7" lengthAdjust="spacing" font-size="10" font-weight="normal" fill="#5a4858" >Italiano</text>
<rect x="1294.3" y="10.3" width="50" height="16.5" rx="3" fill="url(#wbtn)" stroke="#c8d0d8" stroke-width=".6"/>
<text x="1300.7" y="22.2" textLength="33.3" lengthAdjust="spacing" font-size="10" font-weight="normal" fill="#5a4858" >Logout</text><text x="34.4" y="103.0" textLength="69.4" lengthAdjust="spacing" font-size="13.6" font-weight="bold" fill="#fff" >Info e filtri</text>
<text x="36.2" y="128.0" textLength="78.4" lengthAdjust="spacing" font-size="10" font-weight="normal" fill="#352a3a" >Tipo di stazione</text>
<text x="43.6" y="143.8" textLength="106.4" lengthAdjust="spacing" font-size="10.6" font-weight="normal" fill="#352a3a" >- Tutte le stazioni -</text>
<text x="230.6" y="144.3" textLength="64.1" lengthAdjust="spacing" font-size="10" font-weight="normal" fill="#352a3a" >Tipo sensore</text>
<text x="43.6" y="162.6" textLength="92.5" lengthAdjust="spacing" font-size="10.6" font-weight="normal" fill="#352a3a" >- Tutti i sensori -</text>
<text x="42.4" y="190.7" textLength="42.4" lengthAdjust="spacing" font-size="10" font-weight="normal" fill="#555" >Stazione</text>
<text x="43.9" y="218.6" textLength="132.3" lengthAdjust="spacing" font-size="10.6" font-weight="normal" fill="#352a3a" >1-Bellocchio (Bellocchio)</text>
<text x="42.3" y="347.2" textLength="40.8" lengthAdjust="spacing" font-size="10" font-weight="normal" fill="#555" >Sensore</text>
<text x="43.2" y="374.9" textLength="151.3" lengthAdjust="spacing" font-size="10.6" font-weight="normal" fill="#352a3a" >Alimentazione Duosens (V)</text>
<text x="363.9" y="102.8" textLength="25.1" lengthAdjust="spacing" font-size="12.8" font-weight="bold" fill="#fff" >Map</text>
<polygon points="215.5,138.5 221.5,138.5 218.5,142.5" fill="#6a6a6a"/>
<polygon points="215.5,157.5 221.5,157.5 218.5,161.5" fill="#6a6a6a"/>
<polygon points="215.5,212.5 221.5,212.5 218.5,216.5" fill="#6a6a6a"/>
<polygon points="215.5,369.2 221.5,369.2 218.5,373.2" fill="#6a6a6a"/>
<rect x="306" y="98" width="5" height="2.2" fill="#fff"/>
<rect x="1302.5" y="98.2" width="7" height="1.6" fill="#fff"/><rect x="1305.2" y="95.5" width="1.6" height="7" fill="#fff"/>
<line x1="396.3" y1="89" x2="396.3" y2="109" stroke="#8cc8ec" stroke-width=".8" stroke-opacity=".7"/>
<polygon points="402.4,97.8 407.6,97.8 405,101.6" fill="#a8d8f4"/><defs><linearGradient id="sky" x1="0" y1="0" x2="0" y2="1"><stop offset="0" stop-color="#acd0f0"/><stop offset=".6" stop-color="#cadcf0"/><stop offset="1" stop-color="#d8e2ee"/></linearGradient><linearGradient id="wat" x1="0" y1="0" x2="0" y2="1"><stop offset="0" stop-color="#a2b0c6"/><stop offset=".5" stop-color="#93a2ba"/><stop offset="1" stop-color="#8898b2"/></linearGradient><clipPath id="phc"><rect x="112" y="235" width="120" height="89.8"/></clipPath></defs>
<rect x="109.5" y="232.5" width="125" height="95" fill="#fff" stroke="#90c4e0" stroke-width="1"/>
<g clip-path="url(#phc)">
<rect x="112" y="235" width="120" height="89.8" fill="url(#sky)"/>
<ellipse cx="150" cy="252" rx="40" ry="5" fill="#fff" fill-opacity=".18"/>
<rect x="112" y="271.5" width="120" height="2.5" fill="#c8c0c8"/>
<rect x="185" y="270.5" width="47" height="3.5" fill="#8e9680"/>
<rect x="112" y="274" width="120" height="2.5" fill="#9aa080"/>
<rect x="112" y="276.5" width="120" height="3" fill="#b4b8a8"/>
<rect x="112" y="279.5" width="120" height="45.3" fill="url(#wat)"/>
<line x1="112" y1="284" x2="232" y2="284" stroke="#a0aec4" stroke-width=".6" stroke-opacity=".6"/>
<line x1="112" y1="289" x2="232" y2="289" stroke="#a0aec4" stroke-width=".6" stroke-opacity=".6"/>
<line x1="112" y1="295" x2="232" y2="295" stroke="#a0aec4" stroke-width=".6" stroke-opacity=".6"/>
<line x1="112" y1="301" x2="232" y2="301" stroke="#a0aec4" stroke-width=".6" stroke-opacity=".6"/>
<line x1="112" y1="307" x2="232" y2="307" stroke="#a0aec4" stroke-width=".6" stroke-opacity=".6"/>
<polygon points="141.7,324.8 150,318 165,316 180,316 195,313 207,317 213.5,321 213.5,324.8" fill="#b4ae8c"/>
<polygon points="143,324.8 150,319 158,320 163,324.8" fill="#7a9458"/>
<polygon points="203.5,318 231.9,306.5 231.9,310 206,320" fill="#c4ccd4"/>
<path d="M201.8,273 V259.7 M199.5,273 L201.8,262 L204,273" stroke="#888" stroke-width=".6" fill="none"/>
<path d="M166.8,253 V318 M149.2,268.9 L166.8,267.2 M163.4,301.5 V318" stroke="#9a9a9a" stroke-width="1.4" fill="none"/>
<rect x="148.5" y="269.5" width="2" height="3" fill="#777"/>
<polygon points="165,246.5 174.5,244.7 176.8,254 167,255.5" fill="#8a98b8" stroke="#eee" stroke-width="1"/>
<rect x="166" y="279.7" width="11.1" height="15.1" fill="#5a5e62"/>
<path d="M214.3,324.8 Q215,310 231.9,306.5 V324.8 Z" fill="#1a5a9c"/>
<rect x="222.8" y="311.5" width="3" height="2.5" fill="#fff"/><rect x="222.8" y="315.6" width="3" height="8.5" fill="#fff"/>
</g><polygon points="54.2,507.8 54.2,454.8 55.8,440.3 57.3,425.8 58.7,485.6 61.6,500 63.5,443 65,431.6 67.3,425.8 69.3,476 72.2,500 74.1,452.8 74.7,418 78,439.3 78.9,425.8 79.9,491.4 82.8,500 84.7,425.8 86.6,439.3 88.6,425.8 90.5,483.7 92.4,500 94.3,418 98.2,418 100.1,500 103,500 105.9,410.4 107.8,431.6 108.8,418 111.7,491.4 113.6,500 115.5,402.7 117.5,429.7 119.4,418 122.3,491.4 124.2,500 126.1,414.3 126.9,410.4 128.9,418 130.8,491.4 133.1,507.7 136.2,410.4 137.5,433.5 138.9,418 141.4,481.7 143.3,500 146.6,410.4 149.1,423.9 151,481.7 153.9,500 156.8,418 158.7,445.1 159.7,425.8 161.6,481.7 165.5,506.8 167.4,418 170.3,425.8 172.2,481.7 175.1,500 177,418 179,433.5 180.9,418 182.8,500 185.7,500 187.6,433.5 190.5,425.8 193.4,491.4 195.3,500 198.2,418 200.2,433.5 202.1,481.7 205,500 207.5,424.9 208.5,424.9 208.5,507.8" fill="#c4d8f8"/>
<polyline points="54.2,454.8 55.8,440.3 57.3,425.8 58.7,485.6 61.6,500 63.5,443 65,431.6 67.3,425.8 69.3,476 72.2,500 74.1,452.8 74.7,418 78,439.3 78.9,425.8 79.9,491.4 82.8,500 84.7,425.8 86.6,439.3 88.6,425.8 90.5,483.7 92.4,500 94.3,418 98.2,418 100.1,500 103,500 105.9,410.4 107.8,431.6 108.8,418 111.7,491.4 113.6,500 115.5,402.7 117.5,429.7 119.4,418 122.3,491.4 124.2,500 126.1,414.3 126.9,410.4 128.9,418 130.8,491.4 133.1,507.7 136.2,410.4 137.5,433.5 138.9,418 141.4,481.7 143.3,500 146.6,410.4 149.1,423.9 151,481.7 153.9,500 156.8,418 158.7,445.1 159.7,425.8 161.6,481.7 165.5,506.8 167.4,418 170.3,425.8 172.2,481.7 175.1,500 177,418 179,433.5 180.9,418 182.8,500 185.7,500 187.6,433.5 190.5,425.8 193.4,491.4 195.3,500 198.2,418 200.2,433.5 202.1,481.7 205,500 207.5,424.9" fill="none" stroke="#2a2aee" stroke-width="1.1"/>
<circle cx="115.5" cy="402.7" r="1.3" fill="#f8a020"/><circle cx="133.1" cy="507.7" r="1.3" fill="#f8a020"/><circle cx="207.5" cy="424.9" r="1.3" fill="#f8a020"/>
<text x="53.7" y="517.7" textLength="114.9" lengthAdjust="spacingAndGlyphs" font-size="8" font-weight="normal" fill="#222" >Primo: 13,2 20/06/13 11:00</text>
<text x="53.7" y="528.6" textLength="117.8" lengthAdjust="spacingAndGlyphs" font-size="8" font-weight="normal" fill="#222" >Ultimo: 13,6 05/07/13 09:00</text>
<text x="53.7" y="539.6" textLength="106.0" lengthAdjust="spacingAndGlyphs" font-size="8" font-weight="normal" fill="#222" >Min: 12,5 28/06/13 04:00</text>
<text x="53.7" y="550.6" textLength="109.1" lengthAdjust="spacingAndGlyphs" font-size="8" font-weight="normal" fill="#222" >Max: 13,9 26/06/13 10:00</text>
<rect x="275.7" y="400.7" width="16" height="108.8" fill="#f0f0f0" stroke="#e0e0e0" stroke-width=".6"/>
<polygon points="280.5,411 286.5,411 283.5,407" fill="#333"/>
<polygon points="280.5,499.5 286.5,499.5 283.5,503.5" fill="#333"/>
<defs><linearGradient id="thumb" x1="0" x2="1"><stop offset="0" stop-color="#dcdcdc"/><stop offset=".5" stop-color="#f8f8f8"/><stop offset="1" stop-color="#c8c8c8"/></linearGradient></defs>
<rect x="276.5" y="420.5" width="14" height="71.5" rx="2" fill="url(#thumb)" stroke="#999" stroke-width=".8"/>
<path d="M281,452.5 H286 M281,454.5 H286 M281,456.5 H286" stroke="#555" stroke-width=".7"/></svg>
</body></html>
